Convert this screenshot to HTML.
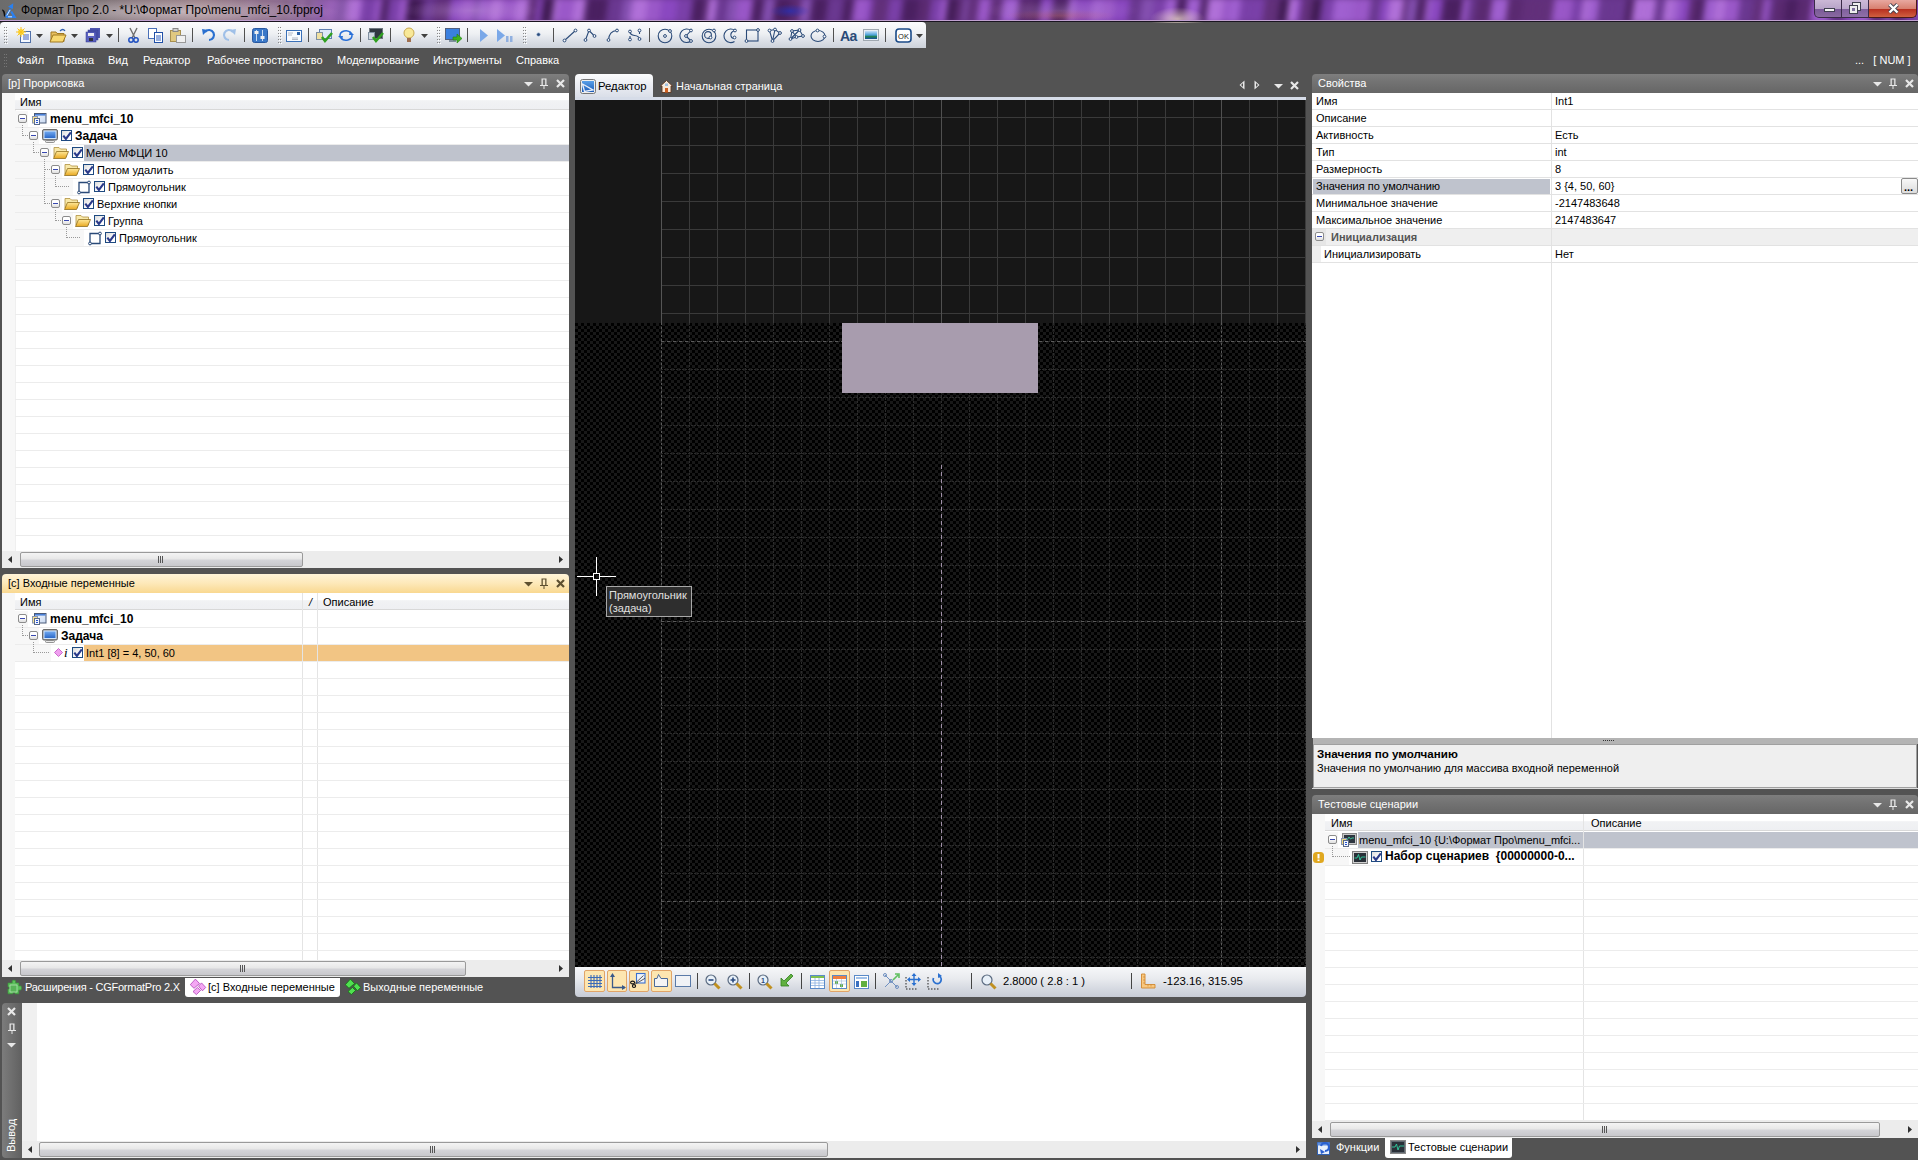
<!DOCTYPE html>
<html><head><meta charset="utf-8"><style>
*{box-sizing:border-box;margin:0;padding:0}
html,body{width:1918px;height:1160px;overflow:hidden;background:#535353;font-family:"Liberation Sans",sans-serif;font-size:11px;color:#000}
.a{position:absolute}
.t{position:absolute;white-space:nowrap;line-height:13px}
svg{position:absolute;overflow:visible}
.b{font-weight:bold}
</style></head><body>
<div class="a" style="left:0px;top:0px;width:1918px;height:21px;background:#5e2e80"></div>
<div class="a" style="left:0;top:0;width:1918px;height:21px;overflow:hidden"><div class="a" style="left:-20px;top:-2px;width:1960px;height:25px;filter:blur(3px)"><div class="a" style="left:0px;top:0;width:9px;height:25px;background:#8450b0;transform:skewX(-8deg)"></div><div class="a" style="left:9px;top:0;width:14px;height:25px;background:#a060d0;transform:skewX(-8deg)"></div><div class="a" style="left:23px;top:0;width:9px;height:25px;background:#5a2a70;transform:skewX(-8deg)"></div><div class="a" style="left:32px;top:0;width:4px;height:25px;background:#8a48c0;transform:skewX(-8deg)"></div><div class="a" style="left:36px;top:0;width:5px;height:25px;background:#8a48c0;transform:skewX(-8deg)"></div><div class="a" style="left:41px;top:0;width:4px;height:25px;background:#7a40a8;transform:skewX(-8deg)"></div><div class="a" style="left:45px;top:0;width:7px;height:25px;background:#4a2060;transform:skewX(-8deg)"></div><div class="a" style="left:52px;top:0;width:13px;height:25px;background:#4a2060;transform:skewX(-8deg)"></div><div class="a" style="left:65px;top:0;width:7px;height:25px;background:#9a58c8;transform:skewX(-8deg)"></div><div class="a" style="left:72px;top:0;width:8px;height:25px;background:#a060d0;transform:skewX(-8deg)"></div><div class="a" style="left:80px;top:0;width:13px;height:25px;background:#9a58c8;transform:skewX(-8deg)"></div><div class="a" style="left:93px;top:0;width:5px;height:25px;background:#5a2a70;transform:skewX(-8deg)"></div><div class="a" style="left:98px;top:0;width:9px;height:25px;background:#a060d0;transform:skewX(-8deg)"></div><div class="a" style="left:107px;top:0;width:13px;height:25px;background:#9a58c8;transform:skewX(-8deg)"></div><div class="a" style="left:120px;top:0;width:11px;height:25px;background:#62307a;transform:skewX(-8deg)"></div><div class="a" style="left:131px;top:0;width:16px;height:25px;background:#8a48c0;transform:skewX(-8deg)"></div><div class="a" style="left:147px;top:0;width:9px;height:25px;background:#9a58c8;transform:skewX(-8deg)"></div><div class="a" style="left:156px;top:0;width:15px;height:25px;background:#4a2060;transform:skewX(-8deg)"></div><div class="a" style="left:171px;top:0;width:13px;height:25px;background:#8a48c0;transform:skewX(-8deg)"></div><div class="a" style="left:184px;top:0;width:9px;height:25px;background:#3e1a50;transform:skewX(-8deg)"></div><div class="a" style="left:193px;top:0;width:13px;height:25px;background:#7a40a8;transform:skewX(-8deg)"></div><div class="a" style="left:206px;top:0;width:12px;height:25px;background:#b070d8;transform:skewX(-8deg)"></div><div class="a" style="left:218px;top:0;width:6px;height:25px;background:#8450b0;transform:skewX(-8deg)"></div><div class="a" style="left:224px;top:0;width:4px;height:25px;background:#7a40a8;transform:skewX(-8deg)"></div><div class="a" style="left:228px;top:0;width:16px;height:25px;background:#3e1a50;transform:skewX(-8deg)"></div><div class="a" style="left:244px;top:0;width:9px;height:25px;background:#62307a;transform:skewX(-8deg)"></div><div class="a" style="left:253px;top:0;width:13px;height:25px;background:#4a2060;transform:skewX(-8deg)"></div><div class="a" style="left:266px;top:0;width:5px;height:25px;background:#8450b0;transform:skewX(-8deg)"></div><div class="a" style="left:271px;top:0;width:15px;height:25px;background:#4a2060;transform:skewX(-8deg)"></div><div class="a" style="left:286px;top:0;width:15px;height:25px;background:#62307a;transform:skewX(-8deg)"></div><div class="a" style="left:301px;top:0;width:8px;height:25px;background:#3e1a50;transform:skewX(-8deg)"></div><div class="a" style="left:309px;top:0;width:4px;height:25px;background:#8450b0;transform:skewX(-8deg)"></div><div class="a" style="left:313px;top:0;width:6px;height:25px;background:#62307a;transform:skewX(-8deg)"></div><div class="a" style="left:319px;top:0;width:4px;height:25px;background:#b070d8;transform:skewX(-8deg)"></div><div class="a" style="left:323px;top:0;width:6px;height:25px;background:#62307a;transform:skewX(-8deg)"></div><div class="a" style="left:329px;top:0;width:10px;height:25px;background:#8450b0;transform:skewX(-8deg)"></div><div class="a" style="left:339px;top:0;width:5px;height:25px;background:#8a48c0;transform:skewX(-8deg)"></div><div class="a" style="left:344px;top:0;width:12px;height:25px;background:#9a58c8;transform:skewX(-8deg)"></div><div class="a" style="left:356px;top:0;width:10px;height:25px;background:#8450b0;transform:skewX(-8deg)"></div><div class="a" style="left:366px;top:0;width:15px;height:25px;background:#b070d8;transform:skewX(-8deg)"></div><div class="a" style="left:381px;top:0;width:14px;height:25px;background:#7a40a8;transform:skewX(-8deg)"></div><div class="a" style="left:395px;top:0;width:6px;height:25px;background:#9a58c8;transform:skewX(-8deg)"></div><div class="a" style="left:401px;top:0;width:7px;height:25px;background:#4a2060;transform:skewX(-8deg)"></div><div class="a" style="left:408px;top:0;width:11px;height:25px;background:#7a40a8;transform:skewX(-8deg)"></div><div class="a" style="left:419px;top:0;width:8px;height:25px;background:#9a58c8;transform:skewX(-8deg)"></div><div class="a" style="left:427px;top:0;width:10px;height:25px;background:#3e1a50;transform:skewX(-8deg)"></div><div class="a" style="left:437px;top:0;width:6px;height:25px;background:#4a2060;transform:skewX(-8deg)"></div><div class="a" style="left:443px;top:0;width:11px;height:25px;background:#6a3890;transform:skewX(-8deg)"></div><div class="a" style="left:454px;top:0;width:16px;height:25px;background:#62307a;transform:skewX(-8deg)"></div><div class="a" style="left:470px;top:0;width:10px;height:25px;background:#8a48c0;transform:skewX(-8deg)"></div><div class="a" style="left:480px;top:0;width:14px;height:25px;background:#9a58c8;transform:skewX(-8deg)"></div><div class="a" style="left:494px;top:0;width:5px;height:25px;background:#8450b0;transform:skewX(-8deg)"></div><div class="a" style="left:499px;top:0;width:6px;height:25px;background:#a060d0;transform:skewX(-8deg)"></div><div class="a" style="left:505px;top:0;width:5px;height:25px;background:#9a58c8;transform:skewX(-8deg)"></div><div class="a" style="left:510px;top:0;width:12px;height:25px;background:#b070d8;transform:skewX(-8deg)"></div><div class="a" style="left:522px;top:0;width:13px;height:25px;background:#9a58c8;transform:skewX(-8deg)"></div><div class="a" style="left:535px;top:0;width:13px;height:25px;background:#b070d8;transform:skewX(-8deg)"></div><div class="a" style="left:548px;top:0;width:9px;height:25px;background:#62307a;transform:skewX(-8deg)"></div><div class="a" style="left:557px;top:0;width:5px;height:25px;background:#8a48c0;transform:skewX(-8deg)"></div><div class="a" style="left:562px;top:0;width:11px;height:25px;background:#3e1a50;transform:skewX(-8deg)"></div><div class="a" style="left:573px;top:0;width:5px;height:25px;background:#b070d8;transform:skewX(-8deg)"></div><div class="a" style="left:578px;top:0;width:15px;height:25px;background:#9a58c8;transform:skewX(-8deg)"></div><div class="a" style="left:593px;top:0;width:12px;height:25px;background:#b070d8;transform:skewX(-8deg)"></div><div class="a" style="left:605px;top:0;width:6px;height:25px;background:#4a2060;transform:skewX(-8deg)"></div><div class="a" style="left:611px;top:0;width:16px;height:25px;background:#4a2060;transform:skewX(-8deg)"></div><div class="a" style="left:627px;top:0;width:15px;height:25px;background:#6a3890;transform:skewX(-8deg)"></div><div class="a" style="left:642px;top:0;width:9px;height:25px;background:#8450b0;transform:skewX(-8deg)"></div><div class="a" style="left:651px;top:0;width:16px;height:25px;background:#b070d8;transform:skewX(-8deg)"></div><div class="a" style="left:667px;top:0;width:14px;height:25px;background:#9a58c8;transform:skewX(-8deg)"></div><div class="a" style="left:681px;top:0;width:16px;height:25px;background:#8a48c0;transform:skewX(-8deg)"></div><div class="a" style="left:697px;top:0;width:15px;height:25px;background:#7a40a8;transform:skewX(-8deg)"></div><div class="a" style="left:712px;top:0;width:12px;height:25px;background:#4a2060;transform:skewX(-8deg)"></div><div class="a" style="left:724px;top:0;width:4px;height:25px;background:#62307a;transform:skewX(-8deg)"></div><div class="a" style="left:728px;top:0;width:8px;height:25px;background:#b070d8;transform:skewX(-8deg)"></div><div class="a" style="left:736px;top:0;width:11px;height:25px;background:#6a3890;transform:skewX(-8deg)"></div><div class="a" style="left:747px;top:0;width:9px;height:25px;background:#8450b0;transform:skewX(-8deg)"></div><div class="a" style="left:756px;top:0;width:5px;height:25px;background:#9a58c8;transform:skewX(-8deg)"></div><div class="a" style="left:761px;top:0;width:11px;height:25px;background:#9a58c8;transform:skewX(-8deg)"></div><div class="a" style="left:772px;top:0;width:11px;height:25px;background:#4a2060;transform:skewX(-8deg)"></div><div class="a" style="left:783px;top:0;width:11px;height:25px;background:#8450b0;transform:skewX(-8deg)"></div><div class="a" style="left:794px;top:0;width:16px;height:25px;background:#4a2060;transform:skewX(-8deg)"></div><div class="a" style="left:810px;top:0;width:10px;height:25px;background:#5a2a70;transform:skewX(-8deg)"></div><div class="a" style="left:820px;top:0;width:11px;height:25px;background:#8450b0;transform:skewX(-8deg)"></div><div class="a" style="left:831px;top:0;width:16px;height:25px;background:#4a2060;transform:skewX(-8deg)"></div><div class="a" style="left:847px;top:0;width:16px;height:25px;background:#6a3890;transform:skewX(-8deg)"></div><div class="a" style="left:863px;top:0;width:10px;height:25px;background:#4a2060;transform:skewX(-8deg)"></div><div class="a" style="left:873px;top:0;width:15px;height:25px;background:#9a58c8;transform:skewX(-8deg)"></div><div class="a" style="left:888px;top:0;width:4px;height:25px;background:#8a48c0;transform:skewX(-8deg)"></div><div class="a" style="left:892px;top:0;width:16px;height:25px;background:#62307a;transform:skewX(-8deg)"></div><div class="a" style="left:908px;top:0;width:14px;height:25px;background:#7a40a8;transform:skewX(-8deg)"></div><div class="a" style="left:922px;top:0;width:12px;height:25px;background:#4a2060;transform:skewX(-8deg)"></div><div class="a" style="left:934px;top:0;width:4px;height:25px;background:#4a2060;transform:skewX(-8deg)"></div><div class="a" style="left:938px;top:0;width:12px;height:25px;background:#5a2a70;transform:skewX(-8deg)"></div><div class="a" style="left:950px;top:0;width:10px;height:25px;background:#7a40a8;transform:skewX(-8deg)"></div><div class="a" style="left:960px;top:0;width:7px;height:25px;background:#9a58c8;transform:skewX(-8deg)"></div><div class="a" style="left:967px;top:0;width:8px;height:25px;background:#3e1a50;transform:skewX(-8deg)"></div><div class="a" style="left:975px;top:0;width:8px;height:25px;background:#5a2a70;transform:skewX(-8deg)"></div><div class="a" style="left:983px;top:0;width:4px;height:25px;background:#8450b0;transform:skewX(-8deg)"></div><div class="a" style="left:987px;top:0;width:11px;height:25px;background:#62307a;transform:skewX(-8deg)"></div><div class="a" style="left:998px;top:0;width:12px;height:25px;background:#9a58c8;transform:skewX(-8deg)"></div><div class="a" style="left:1010px;top:0;width:12px;height:25px;background:#62307a;transform:skewX(-8deg)"></div><div class="a" style="left:1022px;top:0;width:16px;height:25px;background:#a060d0;transform:skewX(-8deg)"></div><div class="a" style="left:1038px;top:0;width:16px;height:25px;background:#5a2a70;transform:skewX(-8deg)"></div><div class="a" style="left:1054px;top:0;width:6px;height:25px;background:#4a2060;transform:skewX(-8deg)"></div><div class="a" style="left:1060px;top:0;width:12px;height:25px;background:#8a48c0;transform:skewX(-8deg)"></div><div class="a" style="left:1072px;top:0;width:16px;height:25px;background:#4a2060;transform:skewX(-8deg)"></div><div class="a" style="left:1088px;top:0;width:7px;height:25px;background:#a060d0;transform:skewX(-8deg)"></div><div class="a" style="left:1095px;top:0;width:16px;height:25px;background:#8a48c0;transform:skewX(-8deg)"></div><div class="a" style="left:1111px;top:0;width:12px;height:25px;background:#a060d0;transform:skewX(-8deg)"></div><div class="a" style="left:1123px;top:0;width:11px;height:25px;background:#9a58c8;transform:skewX(-8deg)"></div><div class="a" style="left:1134px;top:0;width:15px;height:25px;background:#8a48c0;transform:skewX(-8deg)"></div><div class="a" style="left:1149px;top:0;width:12px;height:25px;background:#6a3890;transform:skewX(-8deg)"></div><div class="a" style="left:1161px;top:0;width:12px;height:25px;background:#8450b0;transform:skewX(-8deg)"></div><div class="a" style="left:1173px;top:0;width:12px;height:25px;background:#7a40a8;transform:skewX(-8deg)"></div><div class="a" style="left:1185px;top:0;width:11px;height:25px;background:#a060d0;transform:skewX(-8deg)"></div><div class="a" style="left:1196px;top:0;width:10px;height:25px;background:#4a2060;transform:skewX(-8deg)"></div><div class="a" style="left:1206px;top:0;width:14px;height:25px;background:#a060d0;transform:skewX(-8deg)"></div><div class="a" style="left:1220px;top:0;width:7px;height:25px;background:#4a2060;transform:skewX(-8deg)"></div><div class="a" style="left:1227px;top:0;width:16px;height:25px;background:#b070d8;transform:skewX(-8deg)"></div><div class="a" style="left:1243px;top:0;width:6px;height:25px;background:#9a58c8;transform:skewX(-8deg)"></div><div class="a" style="left:1249px;top:0;width:11px;height:25px;background:#a060d0;transform:skewX(-8deg)"></div><div class="a" style="left:1260px;top:0;width:10px;height:25px;background:#7a40a8;transform:skewX(-8deg)"></div><div class="a" style="left:1270px;top:0;width:14px;height:25px;background:#7a40a8;transform:skewX(-8deg)"></div><div class="a" style="left:1284px;top:0;width:15px;height:25px;background:#62307a;transform:skewX(-8deg)"></div><div class="a" style="left:1299px;top:0;width:9px;height:25px;background:#3e1a50;transform:skewX(-8deg)"></div><div class="a" style="left:1308px;top:0;width:9px;height:25px;background:#b070d8;transform:skewX(-8deg)"></div><div class="a" style="left:1317px;top:0;width:4px;height:25px;background:#8a48c0;transform:skewX(-8deg)"></div><div class="a" style="left:1321px;top:0;width:11px;height:25px;background:#62307a;transform:skewX(-8deg)"></div><div class="a" style="left:1332px;top:0;width:9px;height:25px;background:#3e1a50;transform:skewX(-8deg)"></div><div class="a" style="left:1341px;top:0;width:12px;height:25px;background:#7a40a8;transform:skewX(-8deg)"></div><div class="a" style="left:1353px;top:0;width:16px;height:25px;background:#a060d0;transform:skewX(-8deg)"></div><div class="a" style="left:1369px;top:0;width:5px;height:25px;background:#a060d0;transform:skewX(-8deg)"></div><div class="a" style="left:1374px;top:0;width:16px;height:25px;background:#9a58c8;transform:skewX(-8deg)"></div><div class="a" style="left:1390px;top:0;width:10px;height:25px;background:#6a3890;transform:skewX(-8deg)"></div><div class="a" style="left:1400px;top:0;width:8px;height:25px;background:#8a48c0;transform:skewX(-8deg)"></div><div class="a" style="left:1408px;top:0;width:15px;height:25px;background:#b070d8;transform:skewX(-8deg)"></div><div class="a" style="left:1423px;top:0;width:4px;height:25px;background:#5a2a70;transform:skewX(-8deg)"></div><div class="a" style="left:1427px;top:0;width:10px;height:25px;background:#8450b0;transform:skewX(-8deg)"></div><div class="a" style="left:1437px;top:0;width:4px;height:25px;background:#3e1a50;transform:skewX(-8deg)"></div><div class="a" style="left:1441px;top:0;width:5px;height:25px;background:#5a2a70;transform:skewX(-8deg)"></div><div class="a" style="left:1446px;top:0;width:5px;height:25px;background:#a060d0;transform:skewX(-8deg)"></div><div class="a" style="left:1451px;top:0;width:11px;height:25px;background:#8a48c0;transform:skewX(-8deg)"></div><div class="a" style="left:1462px;top:0;width:8px;height:25px;background:#4a2060;transform:skewX(-8deg)"></div><div class="a" style="left:1470px;top:0;width:12px;height:25px;background:#4a2060;transform:skewX(-8deg)"></div><div class="a" style="left:1482px;top:0;width:6px;height:25px;background:#9a58c8;transform:skewX(-8deg)"></div><div class="a" style="left:1488px;top:0;width:7px;height:25px;background:#6a3890;transform:skewX(-8deg)"></div><div class="a" style="left:1495px;top:0;width:8px;height:25px;background:#5a2a70;transform:skewX(-8deg)"></div><div class="a" style="left:1503px;top:0;width:8px;height:25px;background:#5a2a70;transform:skewX(-8deg)"></div><div class="a" style="left:1511px;top:0;width:8px;height:25px;background:#a060d0;transform:skewX(-8deg)"></div><div class="a" style="left:1519px;top:0;width:8px;height:25px;background:#a060d0;transform:skewX(-8deg)"></div><div class="a" style="left:1527px;top:0;width:15px;height:25px;background:#5a2a70;transform:skewX(-8deg)"></div><div class="a" style="left:1542px;top:0;width:12px;height:25px;background:#62307a;transform:skewX(-8deg)"></div><div class="a" style="left:1554px;top:0;width:5px;height:25px;background:#62307a;transform:skewX(-8deg)"></div><div class="a" style="left:1559px;top:0;width:14px;height:25px;background:#62307a;transform:skewX(-8deg)"></div><div class="a" style="left:1573px;top:0;width:12px;height:25px;background:#9a58c8;transform:skewX(-8deg)"></div><div class="a" style="left:1585px;top:0;width:7px;height:25px;background:#9a58c8;transform:skewX(-8deg)"></div><div class="a" style="left:1592px;top:0;width:10px;height:25px;background:#7a40a8;transform:skewX(-8deg)"></div><div class="a" style="left:1602px;top:0;width:6px;height:25px;background:#b070d8;transform:skewX(-8deg)"></div><div class="a" style="left:1608px;top:0;width:10px;height:25px;background:#a060d0;transform:skewX(-8deg)"></div><div class="a" style="left:1618px;top:0;width:14px;height:25px;background:#6a3890;transform:skewX(-8deg)"></div><div class="a" style="left:1632px;top:0;width:14px;height:25px;background:#6a3890;transform:skewX(-8deg)"></div><div class="a" style="left:1646px;top:0;width:7px;height:25px;background:#4a2060;transform:skewX(-8deg)"></div><div class="a" style="left:1653px;top:0;width:11px;height:25px;background:#b070d8;transform:skewX(-8deg)"></div><div class="a" style="left:1664px;top:0;width:11px;height:25px;background:#b070d8;transform:skewX(-8deg)"></div><div class="a" style="left:1675px;top:0;width:9px;height:25px;background:#6a3890;transform:skewX(-8deg)"></div><div class="a" style="left:1684px;top:0;width:9px;height:25px;background:#b070d8;transform:skewX(-8deg)"></div><div class="a" style="left:1693px;top:0;width:7px;height:25px;background:#a060d0;transform:skewX(-8deg)"></div><div class="a" style="left:1700px;top:0;width:9px;height:25px;background:#8a48c0;transform:skewX(-8deg)"></div><div class="a" style="left:1709px;top:0;width:8px;height:25px;background:#5a2a70;transform:skewX(-8deg)"></div><div class="a" style="left:1717px;top:0;width:7px;height:25px;background:#4a2060;transform:skewX(-8deg)"></div><div class="a" style="left:1724px;top:0;width:5px;height:25px;background:#a060d0;transform:skewX(-8deg)"></div><div class="a" style="left:1729px;top:0;width:6px;height:25px;background:#a060d0;transform:skewX(-8deg)"></div><div class="a" style="left:1735px;top:0;width:10px;height:25px;background:#b070d8;transform:skewX(-8deg)"></div><div class="a" style="left:1745px;top:0;width:14px;height:25px;background:#9a58c8;transform:skewX(-8deg)"></div><div class="a" style="left:1759px;top:0;width:14px;height:25px;background:#6a3890;transform:skewX(-8deg)"></div><div class="a" style="left:1773px;top:0;width:10px;height:25px;background:#62307a;transform:skewX(-8deg)"></div><div class="a" style="left:1783px;top:0;width:6px;height:25px;background:#9a58c8;transform:skewX(-8deg)"></div><div class="a" style="left:1789px;top:0;width:4px;height:25px;background:#6a3890;transform:skewX(-8deg)"></div><div class="a" style="left:1793px;top:0;width:12px;height:25px;background:#5a2a70;transform:skewX(-8deg)"></div><div class="a" style="left:1805px;top:0;width:12px;height:25px;background:#4a2060;transform:skewX(-8deg)"></div><div class="a" style="left:1817px;top:0;width:14px;height:25px;background:#5a2a70;transform:skewX(-8deg)"></div><div class="a" style="left:1831px;top:0;width:5px;height:25px;background:#9a58c8;transform:skewX(-8deg)"></div><div class="a" style="left:1836px;top:0;width:14px;height:25px;background:#a060d0;transform:skewX(-8deg)"></div><div class="a" style="left:1850px;top:0;width:10px;height:25px;background:#6a3890;transform:skewX(-8deg)"></div><div class="a" style="left:1860px;top:0;width:4px;height:25px;background:#5a2a70;transform:skewX(-8deg)"></div><div class="a" style="left:1864px;top:0;width:11px;height:25px;background:#8a48c0;transform:skewX(-8deg)"></div><div class="a" style="left:1875px;top:0;width:16px;height:25px;background:#a060d0;transform:skewX(-8deg)"></div><div class="a" style="left:1891px;top:0;width:14px;height:25px;background:#62307a;transform:skewX(-8deg)"></div><div class="a" style="left:1905px;top:0;width:8px;height:25px;background:#8450b0;transform:skewX(-8deg)"></div><div class="a" style="left:1913px;top:0;width:7px;height:25px;background:#5a2a70;transform:skewX(-8deg)"></div><div class="a" style="left:1920px;top:0;width:7px;height:25px;background:#62307a;transform:skewX(-8deg)"></div><div class="a" style="left:1927px;top:0;width:11px;height:25px;background:#7a40a8;transform:skewX(-8deg)"></div><div class="a" style="left:1938px;top:0;width:11px;height:25px;background:#8450b0;transform:skewX(-8deg)"></div><div class="a" style="left:1949px;top:0;width:16px;height:25px;background:#9a58c8;transform:skewX(-8deg)"></div></div></div>
<div class="a" style="left:1150px;top:3px;width:55px;height:20px;background:radial-gradient(ellipse 50% 60% at 50% 80%,rgba(235,215,200,.75),rgba(235,215,200,0) 100%)"></div>
<div class="a" style="left:1005px;top:6px;width:110px;height:16px;background:radial-gradient(ellipse 50% 40% at 50% 60%,rgba(220,110,70,.3),rgba(220,110,70,0) 100%)"></div>
<div class="a" style="left:770px;top:4px;width:40px;height:14px;background:radial-gradient(ellipse at center,rgba(30,50,200,.6),rgba(30,50,200,0) 70%)"></div>
<div class="a" style="left:400px;top:0px;width:140px;height:21px;background:radial-gradient(ellipse 50% 50% at 50% 50%,rgba(200,160,220,.35),rgba(200,160,220,0) 100%)"></div>
<div class="a" style="left:980px;top:0px;width:160px;height:21px;background:radial-gradient(ellipse 50% 50% at 50% 50%,rgba(190,150,210,.3),rgba(190,150,210,0) 100%)"></div>
<div class="a" style="left:0px;top:0px;width:360px;height:21px;background:linear-gradient(90deg,#6c6c6c 0,#747070 60px,#8a7a80 130px,#9a8088 200px,rgba(150,120,150,.8) 290px,rgba(140,90,160,0) 360px)"></div>
<div class="a" style="left:10px;top:0px;width:330px;height:21px;background:radial-gradient(ellipse 50% 60% at 50% 55%,rgba(235,225,230,.55),rgba(235,225,230,0) 100%)"></div>
<div class="a" style="left:0px;top:20px;width:1918px;height:1px;background:#c0a0d0"></div>
<div class="a" style="left:0px;top:21px;width:1918px;height:1px;background:#1a1420"></div>
<div class="t" style="left:21px;top:4px;font-size:12px;color:#000">Формат Про 2.0 - *U:\Формат Про\menu_mfci_10.fpproj</div>
<svg style="left:0px;top:0px" width="20" height="20" viewBox="0 0 20 20"><path d="M2.2 10.2 Q4.2 10 4.8 16.5" stroke="#111" stroke-width="1.6" fill="none"/><path d="M5.8 16.8 L10.5 9 M5.8 16.8 H14.5 L11.2 11.5" stroke="#2a80f0" stroke-width="2.2" fill="none"/><path d="M6.8 15.5 L10 10 M8 16.8 H12" stroke="#e8f4ff" stroke-width=".9" fill="none"/><path d="M13.3 3.3 L8 6.8 L12.8 9.2Z" fill="#2a80f0"/></svg>
<div class="a" style="left:1814px;top:0px;width:28px;height:18px;background:linear-gradient(#cbb8d6 0,#b8a4c8 50%,#7a5a98 55%,#8a6aa0 100%);border:1px solid #3a2a48;border-top:none;border-radius:0 0 0 5px"></div>
<div class="a" style="left:1842px;top:0px;width:27px;height:18px;background:linear-gradient(#cdbad8 0,#bca8cc 50%,#80609e 55%,#9070a8 100%);border:1px solid #3a2a48;border-top:none;border-left:none"></div>
<div class="a" style="left:1869px;top:0px;width:48px;height:18px;background:linear-gradient(#e8a8a0 0,#d88070 50%,#b83020 55%,#d06040 100%);border:1px solid #4a1a18;border-top:none;border-left:none;border-radius:0 0 5px 0"></div>
<div class="a" style="left:1824px;top:8px;width:11px;height:4px;background:#f4f4f4;border:1px solid #404050"></div>
<svg style="left:1849px;top:2px" width="12" height="12"><rect x="3.5" y="0.5" width="8" height="8" fill="#eee" stroke="#404050"/><rect x="0.5" y="3.5" width="8" height="8" fill="#eee" stroke="#404050"/><rect x="3" y="6" width="3" height="3" fill="#8070a0"/></svg>
<svg style="left:1888px;top:3px" width="11" height="11"><path d="M1.5 1.5 L9.5 9.5 M9.5 1.5 L1.5 9.5" stroke="#404050" stroke-width="4"/><path d="M1.5 1.5 L9.5 9.5 M9.5 1.5 L1.5 9.5" stroke="#fff" stroke-width="2.4"/></svg>
<div class="a" style="left:0px;top:22px;width:926px;height:26px;background:linear-gradient(#fbfcfd 0,#eef0f3 45%,#dde1e8 70%,#cdd2da 100%);border-radius:4px 4px 0 0"></div>
<div class="a" style="left:4px;top:27px;width:1px;height:1px;background:#888;box-shadow:2px 0 0 #888,1px 1px 0 #fff,3px 1px 0 #fff"></div>
<div class="a" style="left:4px;top:30px;width:1px;height:1px;background:#888;box-shadow:2px 0 0 #888,1px 1px 0 #fff,3px 1px 0 #fff"></div>
<div class="a" style="left:4px;top:33px;width:1px;height:1px;background:#888;box-shadow:2px 0 0 #888,1px 1px 0 #fff,3px 1px 0 #fff"></div>
<div class="a" style="left:4px;top:36px;width:1px;height:1px;background:#888;box-shadow:2px 0 0 #888,1px 1px 0 #fff,3px 1px 0 #fff"></div>
<div class="a" style="left:4px;top:39px;width:1px;height:1px;background:#888;box-shadow:2px 0 0 #888,1px 1px 0 #fff,3px 1px 0 #fff"></div>
<div class="a" style="left:4px;top:42px;width:1px;height:1px;background:#888;box-shadow:2px 0 0 #888,1px 1px 0 #fff,3px 1px 0 #fff"></div>
<svg style="left:16px;top:27px" width="16" height="16" viewBox="0 0 16 16"><rect x="4.5" y="4.5" width="10" height="11" fill="#f4f8ff" stroke="#5070a8"/><path d="M7 8h6M7 10h6M7 12h6" stroke="#4060c0"/><circle cx="5" cy="5" r="3" fill="#ffe040"/><path d="M5 0v10M0 5h10M1.5 1.5l7 7M8.5 1.5l-7 7" stroke="#f8c020" stroke-width="1"/></svg>
<svg style="left:36px;top:34px" width="7" height="4" viewBox="0 0 7 4"><path d="M0 0 H7 L3.5 4Z" fill="#404040"/></svg>
<svg style="left:50px;top:28px" width="17" height="15" viewBox="0 0 17 15"><path d="M1 4h5l1 1.5h7v8H1z" fill="#e8c060" stroke="#a07820"/><path d="M3 7h13l-3 7H0z" fill="#f8d870" stroke="#a07820"/><path d="M10 3q3-3 5 0" stroke="#3060b0" fill="none" stroke-width="1.3"/></svg>
<svg style="left:71px;top:34px" width="7" height="4" viewBox="0 0 7 4"><path d="M0 0 H7 L3.5 4Z" fill="#404040"/></svg>
<svg style="left:86px;top:28px" width="14" height="15" viewBox="0 0 14 15"><rect x="4" y="0" width="10" height="10" fill="#5058b0"/><rect x="2" y="2" width="10" height="10" fill="#4850a8" stroke="#30389a" stroke-width=".5"/><rect x="0" y="4" width="10" height="10" fill="#5a60c0" stroke="#303890" stroke-width=".5"/><rect x="2" y="5" width="6" height="3" fill="#e8e8f0"/><rect x="3" y="10" width="4" height="3" fill="#303040"/></svg>
<svg style="left:106px;top:34px" width="7" height="4" viewBox="0 0 7 4"><path d="M0 0 H7 L3.5 4Z" fill="#404040"/></svg>
<div class="a" style="left:118px;top:28px;width:1px;height:14px;background:#505050"></div>
<svg style="left:128px;top:28px" width="11" height="15" viewBox="0 0 11 15"><path d="M2 0 L7 10 M9 0 L4 10" stroke="#707070" stroke-width="1.4"/><circle cx="3" cy="12" r="2.2" fill="none" stroke="#2050c0" stroke-width="1.5"/><circle cx="8" cy="12" r="2.2" fill="none" stroke="#2050c0" stroke-width="1.5"/></svg>
<svg style="left:148px;top:28px" width="16" height="15" viewBox="0 0 16 15"><rect x="0.5" y="0.5" width="8" height="10" fill="#fff" stroke="#4a70b8"/><rect x="6.5" y="4.5" width="8" height="10" fill="#fff" stroke="#2050a8"/><path d="M8 8h5M8 10h5M8 12h5" stroke="#3060c0"/></svg>
<svg style="left:170px;top:28px" width="16" height="15" viewBox="0 0 16 15"><rect x="0.5" y="2.5" width="10" height="11" fill="#e0c880" stroke="#a89050"/><rect x="3" y="0.5" width="5" height="3" fill="#d0d0d0" stroke="#888"/><rect x="6.5" y="7.5" width="9" height="7" fill="#f0f0f0" stroke="#999"/></svg>
<div class="a" style="left:192px;top:28px;width:1px;height:14px;background:#505050"></div>
<svg style="left:202px;top:29px" width="13" height="12" viewBox="0 0 13 12"><path d="M3 3 A5 5 0 1 1 7 11" fill="none" stroke="#2a70d0" stroke-width="2.2"/><path d="M0 0 L6 1 L1 6Z" fill="#2a70d0"/></svg>
<svg style="left:222px;top:29px" width="14" height="12" viewBox="0 0 14 12"><path d="M11 3 A5 5 0 1 0 7 11" fill="none" stroke="#a0c0e8" stroke-width="2.2"/><path d="M14 0 L8 1 L13 6Z" fill="#a0c0e8"/></svg>
<div class="a" style="left:244px;top:28px;width:1px;height:14px;background:#505050"></div>
<svg style="left:252px;top:28px" width="16" height="15" viewBox="0 0 16 15"><rect x="0.5" y="0.5" width="15" height="14" rx="2" fill="#3a78c8" stroke="#2858a0"/><path d="M4.5 2v11M10.5 2v11" stroke="#c8dcf4"/><rect x="2.5" y="3" width="4" height="3" fill="#f0f0f0"/><rect x="8.5" y="8" width="4" height="3" fill="#f0f0f0"/></svg>
<div class="a" style="left:278px;top:27px;width:1px;height:1px;background:#888;box-shadow:2px 0 0 #888,1px 1px 0 #fff,3px 1px 0 #fff"></div>
<div class="a" style="left:278px;top:30px;width:1px;height:1px;background:#888;box-shadow:2px 0 0 #888,1px 1px 0 #fff,3px 1px 0 #fff"></div>
<div class="a" style="left:278px;top:33px;width:1px;height:1px;background:#888;box-shadow:2px 0 0 #888,1px 1px 0 #fff,3px 1px 0 #fff"></div>
<div class="a" style="left:278px;top:36px;width:1px;height:1px;background:#888;box-shadow:2px 0 0 #888,1px 1px 0 #fff,3px 1px 0 #fff"></div>
<div class="a" style="left:278px;top:39px;width:1px;height:1px;background:#888;box-shadow:2px 0 0 #888,1px 1px 0 #fff,3px 1px 0 #fff"></div>
<div class="a" style="left:278px;top:42px;width:1px;height:1px;background:#888;box-shadow:2px 0 0 #888,1px 1px 0 #fff,3px 1px 0 #fff"></div>
<svg style="left:286px;top:30px" width="16" height="12" viewBox="0 0 16 12"><rect x="0.5" y="0.5" width="15" height="11" fill="#f8fbff" stroke="#3a70b8"/><rect x="11" y="2" width="3" height="3" fill="#2a60a8"/><path d="M2 3h5M2 5h4M6 8h6M6 9.5h6" stroke="#a0a8b8" stroke-width=".8"/></svg>
<div class="a" style="left:308px;top:28px;width:1px;height:14px;background:#505050"></div>
<svg style="left:316px;top:28px" width="17" height="15" viewBox="0 0 17 15"><rect x="3.5" y="1.5" width="12" height="9" fill="#dde8f8" stroke="#6080b0"/><rect x="0.5" y="4.5" width="6" height="7" fill="#f0e0a0" stroke="#8090a0"/><path d="M6 9 L9 13 L16 5" fill="none" stroke="#30a020" stroke-width="2.6"/></svg>
<svg style="left:338px;top:29px" width="16" height="13" viewBox="0 0 16 13"><path d="M2 7 A6 5 0 0 1 13 4" fill="none" stroke="#2a70d8" stroke-width="1.5"/><path d="M14 6 A6 5 0 0 1 3 9" fill="none" stroke="#2a70d8" stroke-width="1.5"/><path d="M12 2 L16 6 L11 6Z M4 11 L0 7 L5 7Z" fill="#2a70d8"/></svg>
<div class="a" style="left:360px;top:28px;width:1px;height:14px;background:#505050"></div>
<svg style="left:368px;top:28px" width="16" height="15" viewBox="0 0 16 15"><rect x="1.5" y="0.5" width="13" height="10" fill="#303840" stroke="#707880"/><rect x="0.5" y="4.5" width="6" height="7" fill="#d0d8e0" stroke="#8090a0"/><path d="M5 9 L8 13 L15 5" fill="none" stroke="#30a020" stroke-width="2.6"/></svg>
<div class="a" style="left:390px;top:28px;width:1px;height:14px;background:#505050"></div>
<svg style="left:403px;top:27px" width="12" height="16" viewBox="0 0 12 16"><circle cx="6" cy="6" r="5" fill="#f8e898" stroke="#c8a850"/><rect x="4" y="11" width="4" height="4" fill="#a07050"/></svg>
<svg style="left:421px;top:34px" width="7" height="4" viewBox="0 0 7 4"><path d="M0 0 H7 L3.5 4Z" fill="#404040"/></svg>
<div class="a" style="left:437px;top:27px;width:1px;height:1px;background:#888;box-shadow:2px 0 0 #888,1px 1px 0 #fff,3px 1px 0 #fff"></div>
<div class="a" style="left:437px;top:30px;width:1px;height:1px;background:#888;box-shadow:2px 0 0 #888,1px 1px 0 #fff,3px 1px 0 #fff"></div>
<div class="a" style="left:437px;top:33px;width:1px;height:1px;background:#888;box-shadow:2px 0 0 #888,1px 1px 0 #fff,3px 1px 0 #fff"></div>
<div class="a" style="left:437px;top:36px;width:1px;height:1px;background:#888;box-shadow:2px 0 0 #888,1px 1px 0 #fff,3px 1px 0 #fff"></div>
<div class="a" style="left:437px;top:39px;width:1px;height:1px;background:#888;box-shadow:2px 0 0 #888,1px 1px 0 #fff,3px 1px 0 #fff"></div>
<div class="a" style="left:437px;top:42px;width:1px;height:1px;background:#888;box-shadow:2px 0 0 #888,1px 1px 0 #fff,3px 1px 0 #fff"></div>
<svg style="left:445px;top:28px" width="17" height="15" viewBox="0 0 17 15"><rect x="0.5" y="0.5" width="14" height="11" fill="#3a80e0" stroke="#506080"/><rect x="4" y="12" width="7" height="2" fill="#8090a0"/><path d="M8 9h4v-3l5 4.5-5 4.5v-3h-4z" fill="#40b020" stroke="#208010" stroke-width=".6"/></svg>
<div class="a" style="left:467px;top:28px;width:1px;height:14px;background:#505050"></div>
<svg style="left:480px;top:29px" width="8" height="13" viewBox="0 0 8 13"><path d="M0 0 L8 6.5 L0 13Z" fill="#7aa8e8"/></svg>
<svg style="left:497px;top:29px" width="17" height="13" viewBox="0 0 17 13"><path d="M0 0 L8 6.5 L0 13Z" fill="#7aa8e8"/><rect x="9" y="7" width="2.5" height="6" fill="#90b0e0"/><rect x="13" y="7" width="2.5" height="6" fill="#90b0e0"/></svg>
<div class="a" style="left:523px;top:27px;width:1px;height:1px;background:#888;box-shadow:2px 0 0 #888,1px 1px 0 #fff,3px 1px 0 #fff"></div>
<div class="a" style="left:523px;top:30px;width:1px;height:1px;background:#888;box-shadow:2px 0 0 #888,1px 1px 0 #fff,3px 1px 0 #fff"></div>
<div class="a" style="left:523px;top:33px;width:1px;height:1px;background:#888;box-shadow:2px 0 0 #888,1px 1px 0 #fff,3px 1px 0 #fff"></div>
<div class="a" style="left:523px;top:36px;width:1px;height:1px;background:#888;box-shadow:2px 0 0 #888,1px 1px 0 #fff,3px 1px 0 #fff"></div>
<div class="a" style="left:523px;top:39px;width:1px;height:1px;background:#888;box-shadow:2px 0 0 #888,1px 1px 0 #fff,3px 1px 0 #fff"></div>
<div class="a" style="left:523px;top:42px;width:1px;height:1px;background:#888;box-shadow:2px 0 0 #888,1px 1px 0 #fff,3px 1px 0 #fff"></div>
<svg style="left:536px;top:32px" width="5" height="5" viewBox="0 0 5 5"><circle cx="2.5" cy="2.5" r="1.6" fill="#2a4a78" stroke="#6a8ab8" stroke-width=".6"/></svg>
<div class="a" style="left:553px;top:28px;width:1px;height:14px;background:#505050"></div>
<svg style="left:563px;top:29px" width="15" height="13" viewBox="0 0 15 13"><path d="M1.5 11.5 L12.5 1.5" stroke="#2a4a78" fill="none" stroke-width="1.1"/><circle cx="1.5" cy="11.5" r="1.4" fill="#fff" stroke="#2a4a78" stroke-width="1"/><circle cx="12.5" cy="1.5" r="1.4" fill="#fff" stroke="#2a4a78" stroke-width="1"/></svg>
<svg style="left:584px;top:29px" width="15" height="13" viewBox="0 0 15 13"><path d="M1.5 11 L5 1.5 L10.5 7" stroke="#2a4a78" fill="none" stroke-width="1.1"/><circle cx="1.5" cy="11" r="1.4" fill="#fff" stroke="#2a4a78" stroke-width="1"/><circle cx="5" cy="1.5" r="1.4" fill="#fff" stroke="#2a4a78" stroke-width="1"/><circle cx="10.5" cy="7" r="1.4" fill="#fff" stroke="#2a4a78" stroke-width="1"/></svg>
<svg style="left:607px;top:29px" width="15" height="13" viewBox="0 0 15 13"><path d="M1.5 11 Q2 2 10 1.5" stroke="#2a4a78" fill="none" stroke-width="1.1"/><circle cx="1.5" cy="11" r="1.4" fill="#fff" stroke="#2a4a78" stroke-width="1"/><circle cx="10" cy="1.5" r="1.4" fill="#fff" stroke="#2a4a78" stroke-width="1"/></svg>
<svg style="left:628px;top:29px" width="15" height="14" viewBox="0 0 15 14"><path d="M2 2.5 Q2 6 6.5 6.5 Q11 7 11.5 10 M2 10.5 V7 M11.5 1.5 V5" stroke="#2a4a78" fill="none" stroke-width="1.1"/><circle cx="2" cy="2.5" r="1.4" fill="#fff" stroke="#2a4a78" stroke-width="1"/><circle cx="11.5" cy="1.5" r="1.4" fill="#fff" stroke="#2a4a78" stroke-width="1"/><circle cx="2" cy="10.5" r="1.4" fill="#fff" stroke="#2a4a78" stroke-width="1"/><circle cx="11.5" cy="10" r="1.4" fill="#fff" stroke="#2a4a78" stroke-width="1"/></svg>
<div class="a" style="left:649px;top:28px;width:1px;height:14px;background:#505050"></div>
<svg style="left:657px;top:28px" width="17" height="15" viewBox="0 0 17 15"><circle cx="8" cy="8" r="6.8" stroke="#2a4a78" fill="none" stroke-width="1.1"/><circle cx="8" cy="8" r="1.4" fill="#fff" stroke="#2a4a78" stroke-width="1"/><circle cx="13" cy="3" r="1.4" fill="#fff" stroke="#2a4a78" stroke-width="1"/></svg>
<svg style="left:679px;top:28px" width="16" height="15" viewBox="0 0 16 15"><path d="M12 2.5 A6.8 6.8 0 1 0 12 13" stroke="#2a4a78" fill="none" stroke-width="1.1"/><path d="M12 2.5 L7 8 L12 13" stroke="#2a4a78" fill="none" stroke-width="1.1"/><circle cx="12" cy="2.5" r="1.4" fill="#fff" stroke="#2a4a78" stroke-width="1"/><circle cx="7" cy="8" r="1.4" fill="#fff" stroke="#2a4a78" stroke-width="1"/><circle cx="12" cy="13" r="1.4" fill="#fff" stroke="#2a4a78" stroke-width="1"/></svg>
<svg style="left:701px;top:28px" width="17" height="15" viewBox="0 0 17 15"><circle cx="8" cy="8" r="6.8" stroke="#2a4a78" fill="none" stroke-width="1.1"/><circle cx="7" cy="7" r="3.4" stroke="#2a4a78" fill="none" stroke-width="1.1"/><circle cx="13" cy="2.5" r="1.4" fill="#fff" stroke="#2a4a78" stroke-width="1"/><circle cx="9.5" cy="9.5" r="1.4" fill="#fff" stroke="#2a4a78" stroke-width="1"/></svg>
<svg style="left:724px;top:28px" width="15" height="15" viewBox="0 0 15 15"><path d="M11 2.5 A6.8 6.8 0 1 0 10.5 13.5" stroke="#2a4a78" fill="none" stroke-width="1.1"/><path d="M11 2.5 Q6 4 7 8 Q8 11 10.5 10" stroke="#2a4a78" fill="none" stroke-width="1.1"/><circle cx="11" cy="2.5" r="1.4" fill="#fff" stroke="#2a4a78" stroke-width="1"/><circle cx="10.5" cy="9.5" r="1.4" fill="#fff" stroke="#2a4a78" stroke-width="1"/></svg>
<svg style="left:745px;top:28px" width="16" height="15" viewBox="0 0 16 15"><rect x="1.5" y="2" width="11.5" height="11" stroke="#2a4a78" fill="none" stroke-width="1.1"/><circle cx="1.5" cy="13" r="1.4" fill="#fff" stroke="#2a4a78" stroke-width="1"/><circle cx="13" cy="2" r="1.4" fill="#fff" stroke="#2a4a78" stroke-width="1"/></svg>
<svg style="left:768px;top:28px" width="15" height="15" viewBox="0 0 15 15"><path d="M1.5 2.5 L7 1.5 L12 5 L4.5 13 Z M7 1.5 L4.5 13" stroke="#2a4a78" fill="none" stroke-width="1.1"/><circle cx="1.5" cy="2.5" r="1.4" fill="#fff" stroke="#2a4a78" stroke-width="1"/><circle cx="7" cy="1.5" r="1.4" fill="#fff" stroke="#2a4a78" stroke-width="1"/><circle cx="12" cy="5" r="1.4" fill="#fff" stroke="#2a4a78" stroke-width="1"/><circle cx="4.5" cy="13" r="1.4" fill="#fff" stroke="#2a4a78" stroke-width="1"/></svg>
<svg style="left:789px;top:28px" width="17" height="14" viewBox="0 0 17 14"><path d="M1.5 11 L3 3 L10.5 2 L14 8 L7.5 9 Z M3 3 L7.5 9 M10.5 2 L1.5 11" stroke="#2a4a78" fill="none" stroke-width="1.1"/><circle cx="1.5" cy="11" r="1.4" fill="#fff" stroke="#2a4a78" stroke-width="1"/><circle cx="3" cy="3" r="1.4" fill="#fff" stroke="#2a4a78" stroke-width="1"/><circle cx="10.5" cy="2" r="1.4" fill="#fff" stroke="#2a4a78" stroke-width="1"/><circle cx="14" cy="8" r="1.4" fill="#fff" stroke="#2a4a78" stroke-width="1"/><circle cx="7.5" cy="9" r="1.4" fill="#fff" stroke="#2a4a78" stroke-width="1"/></svg>
<svg style="left:810px;top:28px" width="17" height="15" viewBox="0 0 17 15"><ellipse cx="8" cy="8" rx="7" ry="5.5" stroke="#2a4a78" fill="none" stroke-width="1.1"/><circle cx="7.5" cy="2.5" r="1.4" fill="#fff" stroke="#2a4a78" stroke-width="1"/><circle cx="14.5" cy="8.5" r="1.4" fill="#fff" stroke="#2a4a78" stroke-width="1"/></svg>
<div class="a" style="left:833px;top:28px;width:1px;height:14px;background:#505050"></div>
<div class="t" style="left:840px;top:29px;font-size:14px;font-weight:bold;color:#2a4a78;line-height:14px;letter-spacing:-0.5px">Aa</div>
<svg style="left:863px;top:29px" width="16" height="12" viewBox="0 0 16 12"><rect x="0.5" y="0.5" width="15" height="11" fill="#e8eef4" stroke="#a0a8b0"/><rect x="2" y="2" width="12" height="8" fill="url(#gimg)"/><defs><linearGradient id="gimg" x1="0" y1="0" x2="0" y2="1"><stop offset="0" stop-color="#c8e0f8"/><stop offset=".5" stop-color="#4aa0d8"/><stop offset=".7" stop-color="#208050"/><stop offset="1" stop-color="#1850a0"/></linearGradient></defs></svg>
<div class="a" style="left:885px;top:28px;width:1px;height:14px;background:#505050"></div>
<svg style="left:895px;top:28px" width="17" height="15" viewBox="0 0 17 15"><rect x="1" y="1" width="15" height="13" rx="3" fill="#fff" stroke="#1a4a88" stroke-width="1.6"/><text x="8.5" y="10.5" font-size="7.5" font-family="Liberation Sans" text-anchor="middle" fill="#222">OK</text></svg>
<svg style="left:916px;top:34px" width="7" height="4" viewBox="0 0 7 4"><path d="M0 0 H7 L3.5 4Z" fill="#404040"/></svg>
<div class="a" style="left:0px;top:48px;width:1918px;height:26px;background:#535353"></div>
<div class="a" style="left:4px;top:54px;width:1px;height:1px;background:#777;box-shadow:2px 0 0 #777"></div>
<div class="a" style="left:4px;top:57px;width:1px;height:1px;background:#777;box-shadow:2px 0 0 #777"></div>
<div class="a" style="left:4px;top:60px;width:1px;height:1px;background:#777;box-shadow:2px 0 0 #777"></div>
<div class="a" style="left:4px;top:63px;width:1px;height:1px;background:#777;box-shadow:2px 0 0 #777"></div>
<div class="a" style="left:4px;top:66px;width:1px;height:1px;background:#777;box-shadow:2px 0 0 #777"></div>
<div class="t" style="left:17px;top:54px;color:#fff">Файл</div>
<div class="t" style="left:57px;top:54px;color:#fff">Правка</div>
<div class="t" style="left:108px;top:54px;color:#fff">Вид</div>
<div class="t" style="left:143px;top:54px;color:#fff">Редактор</div>
<div class="t" style="left:207px;top:54px;color:#fff">Рабочее пространство</div>
<div class="t" style="left:337px;top:54px;color:#fff">Моделирование</div>
<div class="t" style="left:433px;top:54px;color:#fff">Инструменты</div>
<div class="t" style="left:516px;top:54px;color:#fff">Справка</div>
<div class="t" style="left:1855px;top:54px;color:#fff">...&nbsp;&nbsp;&nbsp;[ NUM ]</div>
<div class="a" style="left:2px;top:74px;width:567px;height:19px;background:linear-gradient(#7e7e7e 0,#737373 40%,#666 100%);border-radius:4px 4px 0 0"></div>
<div class="t" style="left:8px;top:77px;color:#fff">[р] Прорисовка</div>
<svg style="left:524px;top:82px" width="9" height="5" viewBox="0 0 9 5"><path d="M0 0 H9 L4.5 4.5Z" fill="#e8e8e8"/></svg>
<svg style="left:540px;top:78px" width="8" height="11" viewBox="0 0 8 11"><path d="M1.5 0.5 H6.5 V7 H8 V8 H4.5 V11 H3.5 V8 H0 V7 H1.5 Z M2.8 1.5 V7 H5.2 V1.5Z" fill="#e8e8e8" fill-rule="evenodd"/></svg>
<svg style="left:556px;top:79px" width="9" height="9" viewBox="0 0 9 9"><path d="M1 1 L8 8 M8 1 L1 8" stroke="#e8e8e8" stroke-width="2.2"/></svg>
<div class="a" style="left:2px;top:93px;width:567px;height:475px;background:#fff"></div>
<div class="a" style="left:2px;top:93px;width:13px;height:458px;background:#f7f7f7"></div>
<div class="a" style="left:15px;top:93px;width:1px;height:458px;background:#efefef"></div>
<div class="a" style="left:15px;top:93px;width:554px;height:17px;background:linear-gradient(#fff 0,#fff 40%,#f1f2f4 45%,#eeeff2 100%)"></div>
<div class="a" style="left:15px;top:109px;width:554px;height:1px;background:#d8d8d8"></div>
<div class="t" style="left:20px;top:96px;color:#000">Имя</div>
<div class="a" style="left:15px;top:127px;width:554px;height:1px;background:#ececec"></div>
<div class="a" style="left:15px;top:144px;width:554px;height:1px;background:#ececec"></div>
<div class="a" style="left:15px;top:161px;width:554px;height:1px;background:#ececec"></div>
<div class="a" style="left:15px;top:178px;width:554px;height:1px;background:#ececec"></div>
<div class="a" style="left:15px;top:195px;width:554px;height:1px;background:#ececec"></div>
<div class="a" style="left:15px;top:212px;width:554px;height:1px;background:#ececec"></div>
<div class="a" style="left:15px;top:229px;width:554px;height:1px;background:#ececec"></div>
<div class="a" style="left:15px;top:246px;width:554px;height:1px;background:#ececec"></div>
<div class="a" style="left:15px;top:263px;width:554px;height:1px;background:#ececec"></div>
<div class="a" style="left:15px;top:280px;width:554px;height:1px;background:#ececec"></div>
<div class="a" style="left:15px;top:297px;width:554px;height:1px;background:#ececec"></div>
<div class="a" style="left:15px;top:314px;width:554px;height:1px;background:#ececec"></div>
<div class="a" style="left:15px;top:331px;width:554px;height:1px;background:#ececec"></div>
<div class="a" style="left:15px;top:348px;width:554px;height:1px;background:#ececec"></div>
<div class="a" style="left:15px;top:365px;width:554px;height:1px;background:#ececec"></div>
<div class="a" style="left:15px;top:382px;width:554px;height:1px;background:#ececec"></div>
<div class="a" style="left:15px;top:399px;width:554px;height:1px;background:#ececec"></div>
<div class="a" style="left:15px;top:416px;width:554px;height:1px;background:#ececec"></div>
<div class="a" style="left:15px;top:433px;width:554px;height:1px;background:#ececec"></div>
<div class="a" style="left:15px;top:450px;width:554px;height:1px;background:#ececec"></div>
<div class="a" style="left:15px;top:467px;width:554px;height:1px;background:#ececec"></div>
<div class="a" style="left:15px;top:484px;width:554px;height:1px;background:#ececec"></div>
<div class="a" style="left:15px;top:501px;width:554px;height:1px;background:#ececec"></div>
<div class="a" style="left:15px;top:518px;width:554px;height:1px;background:#ececec"></div>
<div class="a" style="left:15px;top:535px;width:554px;height:1px;background:#ececec"></div>
<div class="a" style="left:15px;top:111px;width:13px;height:16px;background:#f7f7f7"></div>
<div class="a" style="left:15px;top:128px;width:24px;height:16px;background:#f7f7f7"></div>
<div class="a" style="left:15px;top:145px;width:36px;height:16px;background:#f7f7f7"></div>
<div class="a" style="left:15px;top:162px;width:47px;height:16px;background:#f7f7f7"></div>
<div class="a" style="left:15px;top:179px;width:58px;height:16px;background:#f7f7f7"></div>
<div class="a" style="left:15px;top:196px;width:47px;height:16px;background:#f7f7f7"></div>
<div class="a" style="left:15px;top:213px;width:58px;height:16px;background:#f7f7f7"></div>
<div class="a" style="left:15px;top:230px;width:69px;height:16px;background:#f7f7f7"></div>
<div class="a" style="left:84px;top:145px;width:485px;height:16px;background:#bfc3cd"></div>
<div class="a" style="left:22px;top:125px;width:1px;height:11px;background:repeating-linear-gradient(#999 0 1px,transparent 1px 2px)"></div>
<div class="a" style="left:23px;top:135px;width:6px;height:1px;background:repeating-linear-gradient(90deg,#999 0 1px,transparent 1px 2px)"></div>
<div class="a" style="left:33px;top:142px;width:1px;height:11px;background:repeating-linear-gradient(#999 0 1px,transparent 1px 2px)"></div>
<div class="a" style="left:34px;top:152px;width:6px;height:1px;background:repeating-linear-gradient(90deg,#999 0 1px,transparent 1px 2px)"></div>
<div class="a" style="left:44px;top:159px;width:1px;height:45px;background:repeating-linear-gradient(#999 0 1px,transparent 1px 2px)"></div>
<div class="a" style="left:45px;top:169px;width:6px;height:1px;background:repeating-linear-gradient(90deg,#999 0 1px,transparent 1px 2px)"></div>
<div class="a" style="left:45px;top:203px;width:6px;height:1px;background:repeating-linear-gradient(90deg,#999 0 1px,transparent 1px 2px)"></div>
<div class="a" style="left:55px;top:176px;width:1px;height:11px;background:repeating-linear-gradient(#999 0 1px,transparent 1px 2px)"></div>
<div class="a" style="left:56px;top:186px;width:13px;height:1px;background:repeating-linear-gradient(90deg,#999 0 1px,transparent 1px 2px)"></div>
<div class="a" style="left:55px;top:210px;width:1px;height:11px;background:repeating-linear-gradient(#999 0 1px,transparent 1px 2px)"></div>
<div class="a" style="left:56px;top:220px;width:6px;height:1px;background:repeating-linear-gradient(90deg,#999 0 1px,transparent 1px 2px)"></div>
<div class="a" style="left:66px;top:227px;width:1px;height:11px;background:repeating-linear-gradient(#999 0 1px,transparent 1px 2px)"></div>
<div class="a" style="left:67px;top:237px;width:13px;height:1px;background:repeating-linear-gradient(90deg,#999 0 1px,transparent 1px 2px)"></div>
<div class="a" style="left:18px;top:114px;width:9px;height:9px;background:linear-gradient(#fff 0,#fff 50%,#ececec 70%,#e0e0e0 100%);border:1px solid #8c8c8c;border-radius:2px"></div>
<div class="a" style="left:20px;top:118px;width:5px;height:1px;background:#3848b0"></div>
<svg style="left:32px;top:113px" width="15" height="12" viewBox="0 0 15 12"><defs><linearGradient id="gwin" x1="0" y1="0" x2="1" y2="1"><stop offset="0" stop-color="#f4f8ff"/><stop offset="1" stop-color="#c8d8f0"/></linearGradient></defs><rect x="2.5" y="0.5" width="11.5" height="9.5" fill="url(#gwin)" stroke="#4a5a78"/><rect x="3" y="1" width="10.5" height="1.6" fill="#4a80d8"/><rect x="0.5" y="3.5" width="5" height="6.5" fill="#f8e090" stroke="#8a98b0"/><rect x="2.5" y="5.5" width="5" height="6" fill="#f4f8ff" stroke="#5a6a88"/><rect x="4" y="7" width="2" height="1" fill="#2050d0"/><rect x="4" y="9" width="2" height="1" fill="#2050d0"/></svg>
<div class="t" style="left:50px;top:113px;font-weight:bold;font-size:12px">menu_mfci_10</div>
<div class="a" style="left:29px;top:131px;width:9px;height:9px;background:linear-gradient(#fff 0,#fff 50%,#ececec 70%,#e0e0e0 100%);border:1px solid #8c8c8c;border-radius:2px"></div>
<div class="a" style="left:31px;top:135px;width:5px;height:1px;background:#3848b0"></div>
<svg style="left:42px;top:129px" width="16" height="14" viewBox="0 0 16 14"><defs><linearGradient id="gmon" x1="0" y1="0" x2="0" y2="1"><stop offset="0" stop-color="#70a8f0"/><stop offset="1" stop-color="#2a68c8"/></linearGradient></defs><rect x="0.5" y="0.5" width="15" height="10.5" rx="1.5" fill="#8a8a8a" stroke="#6a6a6a"/><rect x="1.5" y="1.5" width="13" height="8.5" fill="#cfe4fc"/><rect x="2.5" y="2.5" width="11" height="6.5" fill="url(#gmon)"/><rect x="3.5" y="11.5" width="9" height="2" rx="1" fill="#e8e8e8" stroke="#7a7a7a" stroke-width=".8"/></svg>
<div class="a" style="left:61px;top:130px;width:11px;height:11px;background:linear-gradient(135deg,#dcdcdc 0,#f0f0f0 40%,#fff 70%);border:1px solid #1e4a80"></div>
<svg style="left:61.5px;top:130.5px" width="10" height="10" viewBox="0 0 10 10"><path d="M1.3 4.6 L3.9 8 L8.8 1.4" stroke="#2a3a8a" stroke-width="2.1" fill="none"/></svg>
<div class="t" style="left:75px;top:130px;font-weight:bold;font-size:12px">Задача</div>
<div class="a" style="left:40px;top:148px;width:9px;height:9px;background:linear-gradient(#fff 0,#fff 50%,#ececec 70%,#e0e0e0 100%);border:1px solid #8c8c8c;border-radius:2px"></div>
<div class="a" style="left:42px;top:152px;width:5px;height:1px;background:#3848b0"></div>
<svg style="left:53px;top:146px" width="16" height="13" viewBox="0 0 16 13"><path d="M1 1.5 H6 L7.5 3 H13.5 V11 H1Z" fill="#f8e8a8" stroke="#b09040" stroke-width=".8"/><path d="M3.5 5.5 H15.5 L12.5 12.5 H0.5Z" fill="url(#gfold)" stroke="#907020" stroke-width=".8"/><defs><linearGradient id="gfold" x1="0" y1="0" x2="0" y2="1"><stop offset="0" stop-color="#ffe898"/><stop offset="1" stop-color="#e8a820"/></linearGradient></defs></svg>
<div class="a" style="left:72px;top:147px;width:11px;height:11px;background:linear-gradient(135deg,#dcdcdc 0,#f0f0f0 40%,#fff 70%);border:1px solid #1e4a80"></div>
<svg style="left:72.5px;top:147.5px" width="10" height="10" viewBox="0 0 10 10"><path d="M1.3 4.6 L3.9 8 L8.8 1.4" stroke="#2a3a8a" stroke-width="2.1" fill="none"/></svg>
<div class="t" style="left:86px;top:147px;">Меню МФЦИ 10</div>
<div class="a" style="left:51px;top:165px;width:9px;height:9px;background:linear-gradient(#fff 0,#fff 50%,#ececec 70%,#e0e0e0 100%);border:1px solid #8c8c8c;border-radius:2px"></div>
<div class="a" style="left:53px;top:169px;width:5px;height:1px;background:#3848b0"></div>
<svg style="left:64px;top:163px" width="16" height="13" viewBox="0 0 16 13"><path d="M1 1.5 H6 L7.5 3 H13.5 V11 H1Z" fill="#f8e8a8" stroke="#b09040" stroke-width=".8"/><path d="M3.5 5.5 H15.5 L12.5 12.5 H0.5Z" fill="url(#gfold)" stroke="#907020" stroke-width=".8"/><defs><linearGradient id="gfold" x1="0" y1="0" x2="0" y2="1"><stop offset="0" stop-color="#ffe898"/><stop offset="1" stop-color="#e8a820"/></linearGradient></defs></svg>
<div class="a" style="left:83px;top:164px;width:11px;height:11px;background:linear-gradient(135deg,#dcdcdc 0,#f0f0f0 40%,#fff 70%);border:1px solid #1e4a80"></div>
<svg style="left:83.5px;top:164.5px" width="10" height="10" viewBox="0 0 10 10"><path d="M1.3 4.6 L3.9 8 L8.8 1.4" stroke="#2a3a8a" stroke-width="2.1" fill="none"/></svg>
<div class="t" style="left:97px;top:164px;">Потом удалить</div>
<svg style="left:77px;top:180px" width="14" height="14" viewBox="0 0 14 14"><path d="M2 2.5 H12 V12.5 H2Z" fill="none" stroke="#2a4a78" stroke-width="1.3"/><circle cx="12" cy="2.5" r="1.4" fill="#fff" stroke="#2a4a78"/><circle cx="2" cy="12.5" r="1.4" fill="#fff" stroke="#2a4a78"/></svg>
<div class="a" style="left:94px;top:181px;width:11px;height:11px;background:linear-gradient(135deg,#dcdcdc 0,#f0f0f0 40%,#fff 70%);border:1px solid #1e4a80"></div>
<svg style="left:94.5px;top:181.5px" width="10" height="10" viewBox="0 0 10 10"><path d="M1.3 4.6 L3.9 8 L8.8 1.4" stroke="#2a3a8a" stroke-width="2.1" fill="none"/></svg>
<div class="t" style="left:108px;top:181px;">Прямоугольник</div>
<div class="a" style="left:51px;top:199px;width:9px;height:9px;background:linear-gradient(#fff 0,#fff 50%,#ececec 70%,#e0e0e0 100%);border:1px solid #8c8c8c;border-radius:2px"></div>
<div class="a" style="left:53px;top:203px;width:5px;height:1px;background:#3848b0"></div>
<svg style="left:64px;top:197px" width="16" height="13" viewBox="0 0 16 13"><path d="M1 1.5 H6 L7.5 3 H13.5 V11 H1Z" fill="#f8e8a8" stroke="#b09040" stroke-width=".8"/><path d="M3.5 5.5 H15.5 L12.5 12.5 H0.5Z" fill="url(#gfold)" stroke="#907020" stroke-width=".8"/><defs><linearGradient id="gfold" x1="0" y1="0" x2="0" y2="1"><stop offset="0" stop-color="#ffe898"/><stop offset="1" stop-color="#e8a820"/></linearGradient></defs></svg>
<div class="a" style="left:83px;top:198px;width:11px;height:11px;background:linear-gradient(135deg,#dcdcdc 0,#f0f0f0 40%,#fff 70%);border:1px solid #1e4a80"></div>
<svg style="left:83.5px;top:198.5px" width="10" height="10" viewBox="0 0 10 10"><path d="M1.3 4.6 L3.9 8 L8.8 1.4" stroke="#2a3a8a" stroke-width="2.1" fill="none"/></svg>
<div class="t" style="left:97px;top:198px;">Верхние кнопки</div>
<div class="a" style="left:62px;top:216px;width:9px;height:9px;background:linear-gradient(#fff 0,#fff 50%,#ececec 70%,#e0e0e0 100%);border:1px solid #8c8c8c;border-radius:2px"></div>
<div class="a" style="left:64px;top:220px;width:5px;height:1px;background:#3848b0"></div>
<svg style="left:75px;top:214px" width="16" height="13" viewBox="0 0 16 13"><path d="M1 1.5 H6 L7.5 3 H13.5 V11 H1Z" fill="#f8e8a8" stroke="#b09040" stroke-width=".8"/><path d="M3.5 5.5 H15.5 L12.5 12.5 H0.5Z" fill="url(#gfold)" stroke="#907020" stroke-width=".8"/><defs><linearGradient id="gfold" x1="0" y1="0" x2="0" y2="1"><stop offset="0" stop-color="#ffe898"/><stop offset="1" stop-color="#e8a820"/></linearGradient></defs></svg>
<div class="a" style="left:94px;top:215px;width:11px;height:11px;background:linear-gradient(135deg,#dcdcdc 0,#f0f0f0 40%,#fff 70%);border:1px solid #1e4a80"></div>
<svg style="left:94.5px;top:215.5px" width="10" height="10" viewBox="0 0 10 10"><path d="M1.3 4.6 L3.9 8 L8.8 1.4" stroke="#2a3a8a" stroke-width="2.1" fill="none"/></svg>
<div class="t" style="left:108px;top:215px;">Группа</div>
<svg style="left:88px;top:231px" width="14" height="14" viewBox="0 0 14 14"><path d="M2 2.5 H12 V12.5 H2Z" fill="none" stroke="#2a4a78" stroke-width="1.3"/><circle cx="12" cy="2.5" r="1.4" fill="#fff" stroke="#2a4a78"/><circle cx="2" cy="12.5" r="1.4" fill="#fff" stroke="#2a4a78"/></svg>
<div class="a" style="left:105px;top:232px;width:11px;height:11px;background:linear-gradient(135deg,#dcdcdc 0,#f0f0f0 40%,#fff 70%);border:1px solid #1e4a80"></div>
<svg style="left:105.5px;top:232.5px" width="10" height="10" viewBox="0 0 10 10"><path d="M1.3 4.6 L3.9 8 L8.8 1.4" stroke="#2a3a8a" stroke-width="2.1" fill="none"/></svg>
<div class="t" style="left:119px;top:232px;">Прямоугольник</div>
<div class="a" style="left:2px;top:551px;width:567px;height:17px;background:#ececec"></div>
<svg style="left:8px;top:556px" width="4" height="7" viewBox="0 0 4 7"><path d="M4 0 V7 L0 3.5Z" fill="#303030"/></svg>
<svg style="left:559px;top:556px" width="4" height="7" viewBox="0 0 4 7"><path d="M0 0 V7 L4 3.5Z" fill="#303030"/></svg>
<div class="a" style="left:20px;top:552px;width:283px;height:15px;background:linear-gradient(#f4f4f4 0,#e8e8e8 45%,#d4d4d8 55%,#c8c8cc 100%);border:1px solid #9a9a9a;border-radius:2px"></div>
<div class="a" style="left:158px;top:556px;width:1px;height:7px;background:#555"></div>
<div class="a" style="left:160px;top:556px;width:1px;height:7px;background:#555"></div>
<div class="a" style="left:162px;top:556px;width:1px;height:7px;background:#555"></div>
<div class="a" style="left:2px;top:574px;width:567px;height:19px;background:linear-gradient(#fff4d8 0,#fde8b8 50%,#f9d890 100%);border-radius:4px 4px 0 0"></div>
<div class="t" style="left:8px;top:577px;color:#000">[с] Входные переменные</div>
<svg style="left:524px;top:582px" width="9" height="5" viewBox="0 0 9 5"><path d="M0 0 H9 L4.5 4.5Z" fill="#5e5030"/></svg>
<svg style="left:540px;top:578px" width="8" height="11" viewBox="0 0 8 11"><path d="M1.5 0.5 H6.5 V7 H8 V8 H4.5 V11 H3.5 V8 H0 V7 H1.5 Z M2.8 1.5 V7 H5.2 V1.5Z" fill="#5e5030" fill-rule="evenodd"/></svg>
<svg style="left:556px;top:579px" width="9" height="9" viewBox="0 0 9 9"><path d="M1 1 L8 8 M8 1 L1 8" stroke="#5e5030" stroke-width="2.2"/></svg>
<div class="a" style="left:2px;top:593px;width:567px;height:384px;background:#fff"></div>
<div class="a" style="left:2px;top:593px;width:13px;height:367px;background:#f7f7f7"></div>
<div class="a" style="left:15px;top:593px;width:554px;height:17px;background:linear-gradient(#fff 0,#fff 40%,#f1f2f4 45%,#eeeff2 100%)"></div>
<div class="a" style="left:15px;top:609px;width:554px;height:1px;background:#d8d8d8"></div>
<div class="a" style="left:302px;top:593px;width:1px;height:367px;background:#e4e4e4"></div>
<div class="a" style="left:317px;top:593px;width:1px;height:367px;background:#e4e4e4"></div>
<div class="t" style="left:20px;top:596px;">Имя</div>
<div class="t" style="left:309px;top:596px;font-style:italic">/</div>
<div class="t" style="left:323px;top:596px;">Описание</div>
<div class="a" style="left:15px;top:627px;width:554px;height:1px;background:#ececec"></div>
<div class="a" style="left:15px;top:644px;width:554px;height:1px;background:#ececec"></div>
<div class="a" style="left:15px;top:661px;width:554px;height:1px;background:#ececec"></div>
<div class="a" style="left:15px;top:678px;width:554px;height:1px;background:#ececec"></div>
<div class="a" style="left:15px;top:695px;width:554px;height:1px;background:#ececec"></div>
<div class="a" style="left:15px;top:712px;width:554px;height:1px;background:#ececec"></div>
<div class="a" style="left:15px;top:729px;width:554px;height:1px;background:#ececec"></div>
<div class="a" style="left:15px;top:746px;width:554px;height:1px;background:#ececec"></div>
<div class="a" style="left:15px;top:763px;width:554px;height:1px;background:#ececec"></div>
<div class="a" style="left:15px;top:780px;width:554px;height:1px;background:#ececec"></div>
<div class="a" style="left:15px;top:797px;width:554px;height:1px;background:#ececec"></div>
<div class="a" style="left:15px;top:814px;width:554px;height:1px;background:#ececec"></div>
<div class="a" style="left:15px;top:831px;width:554px;height:1px;background:#ececec"></div>
<div class="a" style="left:15px;top:848px;width:554px;height:1px;background:#ececec"></div>
<div class="a" style="left:15px;top:865px;width:554px;height:1px;background:#ececec"></div>
<div class="a" style="left:15px;top:882px;width:554px;height:1px;background:#ececec"></div>
<div class="a" style="left:15px;top:899px;width:554px;height:1px;background:#ececec"></div>
<div class="a" style="left:15px;top:916px;width:554px;height:1px;background:#ececec"></div>
<div class="a" style="left:15px;top:933px;width:554px;height:1px;background:#ececec"></div>
<div class="a" style="left:15px;top:950px;width:554px;height:1px;background:#ececec"></div>
<div class="a" style="left:15px;top:611px;width:13px;height:16px;background:#f7f7f7"></div>
<div class="a" style="left:15px;top:628px;width:24px;height:16px;background:#f7f7f7"></div>
<div class="a" style="left:15px;top:645px;width:36px;height:16px;background:#f7f7f7"></div>
<div class="a" style="left:84px;top:645px;width:218px;height:16px;background:#f2c584"></div>
<div class="a" style="left:303px;top:645px;width:14px;height:16px;background:#f2c584"></div>
<div class="a" style="left:318px;top:645px;width:251px;height:16px;background:#f2c584"></div>
<div class="a" style="left:22px;top:625px;width:1px;height:11px;background:repeating-linear-gradient(#999 0 1px,transparent 1px 2px)"></div>
<div class="a" style="left:23px;top:635px;width:6px;height:1px;background:repeating-linear-gradient(90deg,#999 0 1px,transparent 1px 2px)"></div>
<div class="a" style="left:33px;top:642px;width:1px;height:11px;background:repeating-linear-gradient(#999 0 1px,transparent 1px 2px)"></div>
<div class="a" style="left:34px;top:652px;width:16px;height:1px;background:repeating-linear-gradient(90deg,#999 0 1px,transparent 1px 2px)"></div>
<div class="a" style="left:18px;top:614px;width:9px;height:9px;background:linear-gradient(#fff 0,#fff 50%,#ececec 70%,#e0e0e0 100%);border:1px solid #8c8c8c;border-radius:2px"></div>
<div class="a" style="left:20px;top:618px;width:5px;height:1px;background:#3848b0"></div>
<svg style="left:32px;top:613px" width="15" height="12" viewBox="0 0 15 12"><defs><linearGradient id="gwin" x1="0" y1="0" x2="1" y2="1"><stop offset="0" stop-color="#f4f8ff"/><stop offset="1" stop-color="#c8d8f0"/></linearGradient></defs><rect x="2.5" y="0.5" width="11.5" height="9.5" fill="url(#gwin)" stroke="#4a5a78"/><rect x="3" y="1" width="10.5" height="1.6" fill="#4a80d8"/><rect x="0.5" y="3.5" width="5" height="6.5" fill="#f8e090" stroke="#8a98b0"/><rect x="2.5" y="5.5" width="5" height="6" fill="#f4f8ff" stroke="#5a6a88"/><rect x="4" y="7" width="2" height="1" fill="#2050d0"/><rect x="4" y="9" width="2" height="1" fill="#2050d0"/></svg>
<div class="t" style="left:50px;top:613px;font-weight:bold;font-size:12px">menu_mfci_10</div>
<div class="a" style="left:29px;top:631px;width:9px;height:9px;background:linear-gradient(#fff 0,#fff 50%,#ececec 70%,#e0e0e0 100%);border:1px solid #8c8c8c;border-radius:2px"></div>
<div class="a" style="left:31px;top:635px;width:5px;height:1px;background:#3848b0"></div>
<svg style="left:42px;top:629px" width="16" height="14" viewBox="0 0 16 14"><defs><linearGradient id="gmon" x1="0" y1="0" x2="0" y2="1"><stop offset="0" stop-color="#70a8f0"/><stop offset="1" stop-color="#2a68c8"/></linearGradient></defs><rect x="0.5" y="0.5" width="15" height="10.5" rx="1.5" fill="#8a8a8a" stroke="#6a6a6a"/><rect x="1.5" y="1.5" width="13" height="8.5" fill="#cfe4fc"/><rect x="2.5" y="2.5" width="11" height="6.5" fill="url(#gmon)"/><rect x="3.5" y="11.5" width="9" height="2" rx="1" fill="#e8e8e8" stroke="#7a7a7a" stroke-width=".8"/></svg>
<div class="t" style="left:61px;top:630px;font-weight:bold;font-size:12px">Задача</div>
<svg style="left:54px;top:648px" width="9" height="9" viewBox="0 0 9 9"><path d="M4.5 0.5 L8.5 4.5 L4.5 8.5 L0.5 4.5Z" fill="#f0a0f0" stroke="#c050c0" stroke-width=".8"/></svg>
<div class="t" style="left:64px;top:646px;font-style:italic;font-size:13px;font-family:'Liberation Serif'">i</div>
<div class="a" style="left:72px;top:647px;width:11px;height:11px;background:linear-gradient(135deg,#dcdcdc 0,#f0f0f0 40%,#fff 70%);border:1px solid #1e4a80"></div>
<svg style="left:72.5px;top:647.5px" width="10" height="10" viewBox="0 0 10 10"><path d="M1.3 4.6 L3.9 8 L8.8 1.4" stroke="#2a3a8a" stroke-width="2.1" fill="none"/></svg>
<div class="t" style="left:86px;top:647px;">Int1 [8] = 4, 50, 60</div>
<div class="a" style="left:2px;top:960px;width:567px;height:17px;background:#ececec"></div>
<svg style="left:8px;top:965px" width="4" height="7" viewBox="0 0 4 7"><path d="M4 0 V7 L0 3.5Z" fill="#303030"/></svg>
<svg style="left:559px;top:965px" width="4" height="7" viewBox="0 0 4 7"><path d="M0 0 V7 L4 3.5Z" fill="#303030"/></svg>
<div class="a" style="left:20px;top:961px;width:446px;height:15px;background:linear-gradient(#f4f4f4 0,#e8e8e8 45%,#d4d4d8 55%,#c8c8cc 100%);border:1px solid #9a9a9a;border-radius:2px"></div>
<div class="a" style="left:240px;top:965px;width:1px;height:7px;background:#555"></div>
<div class="a" style="left:242px;top:965px;width:1px;height:7px;background:#555"></div>
<div class="a" style="left:244px;top:965px;width:1px;height:7px;background:#555"></div>
<div class="a" style="left:185px;top:978px;width:155px;height:19px;background:#fff;border-radius:0 0 3px 3px"></div>
<svg style="left:8px;top:980px" width="15" height="15" viewBox="0 0 15 15"><path d="M0 3 H4.2 V0.8 Q5.9 -0.6 7.6 0.8 V3 H10.8 V5.9 H13 Q14.3 8 13 10 H10.8 V13.8 H7 V12.5 H4.9 V13.8 H0 V9 H1.5 V7 H0 Z" fill="#5cc05c" stroke="#3a9a3a" stroke-width=".7"/><path d="M2 5 H9 V12 H2Z" fill="#58b458" stroke="#a8dca8" stroke-width=".9"/></svg>
<div class="t" style="left:25px;top:981px;color:#fff;letter-spacing:-0.25px">Расширения - CGFormatPro 2.X</div>
<svg style="left:189px;top:979px" width="18" height="17" viewBox="0 0 18 17"><path d="M6.4 0.1 L10.5 4.5 L5 9.3 L1.3 5.7Z" fill="#f4a8f4" stroke="#b040b8" stroke-width=".8"/><path d="M12.5 3.9 L16.7 8.4 L13.5 11.8 L9.5 7.2Z" fill="#f4a8f4" stroke="#b040b8" stroke-width=".8"/><path d="M8.4 8.4 L11.6 11.4 L7.4 15.6 L4 12.6Z" fill="#f4a8f4" stroke="#b040b8" stroke-width=".8"/></svg>
<div class="t" style="left:208px;top:981px;">[с] Входные переменные</div>
<svg style="left:344px;top:979px" width="18" height="17" viewBox="0 0 18 17"><path d="M6.4 0.1 L10.5 4.5 L5 9.3 L1.3 5.7Z" fill="#50e050" stroke="#107010" stroke-width=".8"/><path d="M12.5 3.9 L16.7 8.4 L13.5 11.8 L9.5 7.2Z" fill="#50e050" stroke="#107010" stroke-width=".8"/><path d="M8.4 8.4 L11.6 11.4 L7.4 15.6 L4 12.6Z" fill="#50e050" stroke="#107010" stroke-width=".8"/></svg>
<div class="t" style="left:363px;top:981px;color:#fff">Выходные переменные</div>
<div class="a" style="left:2px;top:1003px;width:20px;height:155px;background:linear-gradient(90deg,#7c7c7c,#606060);border-radius:4px 0 0 4px"></div>
<svg style="left:7px;top:1007px" width="9" height="9" viewBox="0 0 9 9"><path d="M1 1 L8 8 M8 1 L1 8" stroke="#e8e8e8" stroke-width="2.2"/></svg>
<svg style="left:8px;top:1023px" width="8" height="11" viewBox="0 0 8 11"><path d="M1.5 0.5 H6.5 V7 H8 V8 H4.5 V11 H3.5 V8 H0 V7 H1.5 Z M2.8 1.5 V7 H5.2 V1.5Z" fill="#e8e8e8" fill-rule="evenodd"/></svg>
<svg style="left:7px;top:1043px" width="9" height="5" viewBox="0 0 9 5"><path d="M0 0 H9 L4.5 4.5Z" fill="#e8e8e8"/></svg>
<div class="t" style="left:5px;top:1152px;color:#fff;transform:rotate(-90deg);transform-origin:0 0">Вывод</div>
<div class="a" style="left:22px;top:1003px;width:1284px;height:155px;background:#fff"></div>
<div class="a" style="left:22px;top:1003px;width:15px;height:138px;background:#f0f0f0"></div>
<div class="a" style="left:22px;top:1141px;width:1284px;height:17px;background:#ececec"></div>
<svg style="left:28px;top:1146px" width="4" height="7" viewBox="0 0 4 7"><path d="M4 0 V7 L0 3.5Z" fill="#303030"/></svg>
<svg style="left:1296px;top:1146px" width="4" height="7" viewBox="0 0 4 7"><path d="M0 0 V7 L4 3.5Z" fill="#303030"/></svg>
<div class="a" style="left:39px;top:1142px;width:789px;height:15px;background:linear-gradient(#f4f4f4 0,#e8e8e8 45%,#d4d4d8 55%,#c8c8cc 100%);border:1px solid #9a9a9a;border-radius:2px"></div>
<div class="a" style="left:430px;top:1146px;width:1px;height:7px;background:#555"></div>
<div class="a" style="left:432px;top:1146px;width:1px;height:7px;background:#555"></div>
<div class="a" style="left:434px;top:1146px;width:1px;height:7px;background:#555"></div>
<div class="a" style="left:575px;top:74px;width:78px;height:26px;background:linear-gradient(#fbfcfd 0,#eceef3 40%,#d6dbe6 100%);border-radius:4px 4px 0 0"></div>
<div class="a" style="left:575px;top:97px;width:731px;height:3px;background:#d6dce8"></div>
<svg style="left:580px;top:79px" width="16" height="15" viewBox="0 0 16 15"><rect x="0.5" y="0.5" width="15" height="14" rx="2" fill="#eee" stroke="#777"/><rect x="2" y="2" width="12" height="11" fill="url(#gedt)"/><path d="M2.5 5 L13 11 L4.5 12.5Z" fill="none" stroke="#e8eef8" stroke-width="1.3"/><defs><linearGradient id="gedt" x1="0" y1="0" x2="0" y2="1"><stop offset="0" stop-color="#5aa0e8"/><stop offset="1" stop-color="#1a5ab8"/></linearGradient></defs></svg>
<div class="t" style="left:598px;top:80px;font-size:11.3px">Редактор</div>
<svg style="left:660px;top:80px" width="13" height="13" viewBox="0 0 13 13"><path d="M6.5 0.5 L12.5 6 H11 V12.5 H2 V6 H0.5Z" fill="#f8e8d8" stroke="#603820" stroke-width=".9"/><rect x="5" y="8" width="3" height="4.5" fill="#d06020"/><rect x="5" y="3.5" width="3" height="2.5" fill="#a0c0e0"/></svg>
<div class="t" style="left:676px;top:80px;color:#fff;font-size:11px">Начальная страница</div>
<svg style="left:1239px;top:80px" width="6" height="10" viewBox="0 0 6 10"><path d="M5.5 0.5 V9.5 L0.5 5Z M4 3 V7 L2 5Z" fill="#e8e8e8" fill-rule="evenodd"/></svg>
<svg style="left:1254px;top:80px" width="6" height="10" viewBox="0 0 6 10"><path d="M0.5 0.5 V9.5 L5.5 5Z M2 3 V7 L4 5Z" fill="#e8e8e8" fill-rule="evenodd"/></svg>
<svg style="left:1274px;top:84px" width="9" height="5" viewBox="0 0 9 5"><path d="M0 0 H9 L4.5 4.5Z" fill="#e8e8e8"/></svg>
<svg style="left:1290px;top:81px" width="9" height="9" viewBox="0 0 9 9"><path d="M1 1 L8 8 M8 1 L1 8" stroke="#e8e8e8" stroke-width="2.2"/></svg>
<div class="a" style="left:575px;top:100px;width:731px;height:223px;background:#171717"></div>
<div class="a" style="left:661px;top:100px;width:645px;height:223px;background-color:#171717;background-image:repeating-linear-gradient(90deg,#3a3a3a 0 1px,transparent 1px 28px),repeating-linear-gradient(#3a3a3a 0 1px,transparent 1px 28px);background-position:0 0,0 17px"></div>
<div class="a" style="left:661px;top:100px;width:1px;height:223px;background:#555"></div>
<div class="a" style="left:941px;top:100px;width:1px;height:223px;background:#505050"></div>
<div class="a" style="left:1221px;top:100px;width:1px;height:223px;background:#505050"></div>
<div class="a" style="left:575px;top:323px;width:731px;height:644px;background-color:#000;background-image:repeating-conic-gradient(#181818 0 25%,#000 0 50%);background-size:6px 6px"></div>
<div class="a" style="left:661px;top:323px;width:1px;height:644px;background:repeating-linear-gradient(#2c2c2c 0 2px,transparent 2px 3px)"></div>
<div class="a" style="left:689px;top:323px;width:1px;height:644px;background:repeating-linear-gradient(#2c2c2c 0 2px,transparent 2px 3px)"></div>
<div class="a" style="left:717px;top:323px;width:1px;height:644px;background:repeating-linear-gradient(#2c2c2c 0 2px,transparent 2px 3px)"></div>
<div class="a" style="left:745px;top:323px;width:1px;height:644px;background:repeating-linear-gradient(#2c2c2c 0 2px,transparent 2px 3px)"></div>
<div class="a" style="left:773px;top:323px;width:1px;height:644px;background:repeating-linear-gradient(#2c2c2c 0 2px,transparent 2px 3px)"></div>
<div class="a" style="left:801px;top:323px;width:1px;height:644px;background:repeating-linear-gradient(#2c2c2c 0 2px,transparent 2px 3px)"></div>
<div class="a" style="left:829px;top:323px;width:1px;height:644px;background:repeating-linear-gradient(#2c2c2c 0 2px,transparent 2px 3px)"></div>
<div class="a" style="left:857px;top:323px;width:1px;height:644px;background:repeating-linear-gradient(#2c2c2c 0 2px,transparent 2px 3px)"></div>
<div class="a" style="left:885px;top:323px;width:1px;height:644px;background:repeating-linear-gradient(#2c2c2c 0 2px,transparent 2px 3px)"></div>
<div class="a" style="left:913px;top:323px;width:1px;height:644px;background:repeating-linear-gradient(#2c2c2c 0 2px,transparent 2px 3px)"></div>
<div class="a" style="left:941px;top:323px;width:1px;height:644px;background:repeating-linear-gradient(#2c2c2c 0 2px,transparent 2px 3px)"></div>
<div class="a" style="left:969px;top:323px;width:1px;height:644px;background:repeating-linear-gradient(#2c2c2c 0 2px,transparent 2px 3px)"></div>
<div class="a" style="left:997px;top:323px;width:1px;height:644px;background:repeating-linear-gradient(#2c2c2c 0 2px,transparent 2px 3px)"></div>
<div class="a" style="left:1025px;top:323px;width:1px;height:644px;background:repeating-linear-gradient(#2c2c2c 0 2px,transparent 2px 3px)"></div>
<div class="a" style="left:1053px;top:323px;width:1px;height:644px;background:repeating-linear-gradient(#2c2c2c 0 2px,transparent 2px 3px)"></div>
<div class="a" style="left:1081px;top:323px;width:1px;height:644px;background:repeating-linear-gradient(#2c2c2c 0 2px,transparent 2px 3px)"></div>
<div class="a" style="left:1109px;top:323px;width:1px;height:644px;background:repeating-linear-gradient(#2c2c2c 0 2px,transparent 2px 3px)"></div>
<div class="a" style="left:1137px;top:323px;width:1px;height:644px;background:repeating-linear-gradient(#2c2c2c 0 2px,transparent 2px 3px)"></div>
<div class="a" style="left:1165px;top:323px;width:1px;height:644px;background:repeating-linear-gradient(#2c2c2c 0 2px,transparent 2px 3px)"></div>
<div class="a" style="left:1193px;top:323px;width:1px;height:644px;background:repeating-linear-gradient(#2c2c2c 0 2px,transparent 2px 3px)"></div>
<div class="a" style="left:1221px;top:323px;width:1px;height:644px;background:repeating-linear-gradient(#2c2c2c 0 2px,transparent 2px 3px)"></div>
<div class="a" style="left:1249px;top:323px;width:1px;height:644px;background:repeating-linear-gradient(#2c2c2c 0 2px,transparent 2px 3px)"></div>
<div class="a" style="left:1277px;top:323px;width:1px;height:644px;background:repeating-linear-gradient(#2c2c2c 0 2px,transparent 2px 3px)"></div>
<div class="a" style="left:1305px;top:323px;width:1px;height:644px;background:repeating-linear-gradient(#2c2c2c 0 2px,transparent 2px 3px)"></div>
<div class="a" style="left:661px;top:341px;width:645px;height:1px;background:repeating-linear-gradient(90deg,#2c2c2c 0 2px,transparent 2px 3px)"></div>
<div class="a" style="left:661px;top:369px;width:645px;height:1px;background:repeating-linear-gradient(90deg,#2c2c2c 0 2px,transparent 2px 3px)"></div>
<div class="a" style="left:661px;top:397px;width:645px;height:1px;background:repeating-linear-gradient(90deg,#2c2c2c 0 2px,transparent 2px 3px)"></div>
<div class="a" style="left:661px;top:425px;width:645px;height:1px;background:repeating-linear-gradient(90deg,#2c2c2c 0 2px,transparent 2px 3px)"></div>
<div class="a" style="left:661px;top:453px;width:645px;height:1px;background:repeating-linear-gradient(90deg,#2c2c2c 0 2px,transparent 2px 3px)"></div>
<div class="a" style="left:661px;top:481px;width:645px;height:1px;background:repeating-linear-gradient(90deg,#2c2c2c 0 2px,transparent 2px 3px)"></div>
<div class="a" style="left:661px;top:509px;width:645px;height:1px;background:repeating-linear-gradient(90deg,#2c2c2c 0 2px,transparent 2px 3px)"></div>
<div class="a" style="left:661px;top:537px;width:645px;height:1px;background:repeating-linear-gradient(90deg,#2c2c2c 0 2px,transparent 2px 3px)"></div>
<div class="a" style="left:661px;top:565px;width:645px;height:1px;background:repeating-linear-gradient(90deg,#2c2c2c 0 2px,transparent 2px 3px)"></div>
<div class="a" style="left:661px;top:593px;width:645px;height:1px;background:repeating-linear-gradient(90deg,#2c2c2c 0 2px,transparent 2px 3px)"></div>
<div class="a" style="left:661px;top:621px;width:645px;height:1px;background:repeating-linear-gradient(90deg,#2c2c2c 0 2px,transparent 2px 3px)"></div>
<div class="a" style="left:661px;top:649px;width:645px;height:1px;background:repeating-linear-gradient(90deg,#2c2c2c 0 2px,transparent 2px 3px)"></div>
<div class="a" style="left:661px;top:677px;width:645px;height:1px;background:repeating-linear-gradient(90deg,#2c2c2c 0 2px,transparent 2px 3px)"></div>
<div class="a" style="left:661px;top:705px;width:645px;height:1px;background:repeating-linear-gradient(90deg,#2c2c2c 0 2px,transparent 2px 3px)"></div>
<div class="a" style="left:661px;top:733px;width:645px;height:1px;background:repeating-linear-gradient(90deg,#2c2c2c 0 2px,transparent 2px 3px)"></div>
<div class="a" style="left:661px;top:761px;width:645px;height:1px;background:repeating-linear-gradient(90deg,#2c2c2c 0 2px,transparent 2px 3px)"></div>
<div class="a" style="left:661px;top:789px;width:645px;height:1px;background:repeating-linear-gradient(90deg,#2c2c2c 0 2px,transparent 2px 3px)"></div>
<div class="a" style="left:661px;top:817px;width:645px;height:1px;background:repeating-linear-gradient(90deg,#2c2c2c 0 2px,transparent 2px 3px)"></div>
<div class="a" style="left:661px;top:845px;width:645px;height:1px;background:repeating-linear-gradient(90deg,#2c2c2c 0 2px,transparent 2px 3px)"></div>
<div class="a" style="left:661px;top:873px;width:645px;height:1px;background:repeating-linear-gradient(90deg,#2c2c2c 0 2px,transparent 2px 3px)"></div>
<div class="a" style="left:661px;top:901px;width:645px;height:1px;background:repeating-linear-gradient(90deg,#2c2c2c 0 2px,transparent 2px 3px)"></div>
<div class="a" style="left:661px;top:929px;width:645px;height:1px;background:repeating-linear-gradient(90deg,#2c2c2c 0 2px,transparent 2px 3px)"></div>
<div class="a" style="left:661px;top:957px;width:645px;height:1px;background:repeating-linear-gradient(90deg,#2c2c2c 0 2px,transparent 2px 3px)"></div>
<div class="a" style="left:661px;top:323px;width:1px;height:644px;background:repeating-linear-gradient(#5a5a5a 0 2px,transparent 2px 4px)"></div>
<div class="a" style="left:1221px;top:323px;width:1px;height:644px;background:repeating-linear-gradient(#5a5a5a 0 2px,transparent 2px 4px)"></div>
<div class="a" style="left:661px;top:341px;width:645px;height:1px;background:repeating-linear-gradient(90deg,#5a5a5a 0 3px,transparent 3px 6px)"></div>
<div class="a" style="left:661px;top:621px;width:645px;height:1px;background:repeating-linear-gradient(90deg,#5a5a5a 0 3px,transparent 3px 6px)"></div>
<div class="a" style="left:661px;top:901px;width:645px;height:1px;background:repeating-linear-gradient(90deg,#5a5a5a 0 3px,transparent 3px 6px)"></div>
<div class="a" style="left:941px;top:465px;width:1px;height:502px;background:repeating-linear-gradient(#a090a8 0 4px,transparent 4px 7px)"></div>
<div class="a" style="left:941px;top:323px;width:1px;height:142px;background:repeating-linear-gradient(#2c2c2c 0 2px,transparent 2px 3px)"></div>
<div class="a" style="left:842px;top:323px;width:196px;height:70px;background:#a89cae"></div>
<div class="a" style="left:577px;top:576px;width:16px;height:1px;background:#fff"></div>
<div class="a" style="left:600px;top:576px;width:16px;height:1px;background:#fff"></div>
<div class="a" style="left:596px;top:557px;width:1px;height:16px;background:#fff"></div>
<div class="a" style="left:596px;top:580px;width:1px;height:16px;background:#fff"></div>
<div class="a" style="left:593px;top:573px;width:7px;height:7px;background:transparent;border:1px solid #fff"></div>
<div class="a" style="left:606px;top:586px;width:86px;height:31px;background:#2e2e2e;border:1px solid #a8a8a8"></div>
<div class="t" style="left:609px;top:589px;color:#e0e0e0">Прямоугольник</div>
<div class="t" style="left:609px;top:602px;color:#e0e0e0">(задача)</div>
<div class="a" style="left:575px;top:967px;width:731px;height:30px;background:linear-gradient(#f6f7f9 0,#e8eaee 40%,#d4d8e0 75%,#c8ccd6 100%);border-radius:0 0 4px 4px"></div>
<div class="a" style="left:584px;top:970px;width:21px;height:22px;background:#fde6b0;border:1px solid #e0a468;border-radius:2px"></div>
<div class="a" style="left:607px;top:970px;width:20px;height:22px;background:#fde6b0;border:1px solid #e0a468;border-radius:2px"></div>
<div class="a" style="left:629px;top:970px;width:20px;height:22px;background:#fde6b0;border:1px solid #e0a468;border-radius:2px"></div>
<div class="a" style="left:651px;top:970px;width:21px;height:22px;background:#fde6b0;border:1px solid #e0a468;border-radius:2px"></div>
<div class="a" style="left:829px;top:970px;width:21px;height:22px;background:#fde6b0;border:1px solid #e0a468;border-radius:2px"></div>
<svg style="left:588px;top:975px" width="14" height="13" viewBox="0 0 14 13"><path d="M3 0v13M6 0v13M9 0v13M12 0v13M0 2.5h14M0 5.5h14M0 8.5h14M0 11.5h14" stroke="#3a6ab8" stroke-width="1.1"/></svg>
<svg style="left:609px;top:973px" width="17" height="17" viewBox="0 0 17 17"><path d="M3.5 2v12.5H16" stroke="#3a5a8a" stroke-width="1.3" fill="none"/><path d="M3.5 0 L1 4 H6Z M17 14.5 L13 12 V17Z" fill="#3a5a8a"/></svg>
<svg style="left:630px;top:973px" width="17" height="17" viewBox="0 0 17 17"><rect x="6.5" y="0.5" width="8.5" height="9.5" fill="#eef2fa" stroke="#3a70d0" stroke-width="1.1"/><path d="M5 10.5 L13.5 2.5 M5.5 11 L15 5.3" stroke="#333" stroke-width=".8"/><ellipse cx="2.6" cy="9.5" rx="2" ry="1.4" fill="none" stroke="#111" stroke-width="1.1"/><ellipse cx="4" cy="13" rx="1.6" ry="1.4" fill="none" stroke="#111" stroke-width="1.1"/></svg>
<svg style="left:654px;top:974px" width="14" height="13" viewBox="0 0 14 13"><path d="M0.5 4.5 H3 L4.5 0.5 L7 4.5 H13.5 V12.5 H0.5Z" fill="#f4f4f4" stroke="#4a6a98"/></svg>
<svg style="left:675px;top:975px" width="16" height="12" viewBox="0 0 16 12"><rect x="0.5" y="0.5" width="15" height="11" fill="#f0f2f6" stroke="#5a7aa8"/></svg>
<div class="a" style="left:697px;top:973px;width:1px;height:16px;background:#444"></div>
<svg style="left:705px;top:974px" width="16" height="16" viewBox="0 0 16 16"><circle cx="6" cy="6" r="5" fill="#e8f0f8" stroke="#5a6a80" stroke-width="1.2"/><path d="M9.5 9.5 L14.5 14.5" stroke="#c09020" stroke-width="3"/><path d="M3.5 6h5" stroke="#2a4a80" stroke-width="1.6"/></svg>
<svg style="left:727px;top:974px" width="16" height="16" viewBox="0 0 16 16"><circle cx="6" cy="6" r="5" fill="#e8f0f8" stroke="#5a6a80" stroke-width="1.2"/><path d="M9.5 9.5 L14.5 14.5" stroke="#c09020" stroke-width="3"/><path d="M3.5 6h5M6 3.5v5" stroke="#2a4a80" stroke-width="1.6"/></svg>
<div class="a" style="left:749px;top:973px;width:1px;height:16px;background:#444"></div>
<svg style="left:757px;top:974px" width="16" height="16" viewBox="0 0 16 16"><circle cx="6" cy="6" r="5" fill="#e8f0f8" stroke="#5a6a80" stroke-width="1.2"/><path d="M9.5 9.5 L14.5 14.5" stroke="#c09020" stroke-width="3"/><text x="6" y="8.5" font-size="7" font-family="Liberation Sans" font-weight="bold" text-anchor="middle" fill="#2a4a80">1</text></svg>
<svg style="left:780px;top:974px" width="15" height="15" viewBox="0 0 15 15"><path d="M13 2 L6 9 L9 12 H1 V4 L4 7 L11 0Z" fill="#60b040" stroke="#308020" stroke-width=".8"/></svg>
<div class="a" style="left:801px;top:973px;width:1px;height:16px;background:#444"></div>
<svg style="left:810px;top:975px" width="15" height="14" viewBox="0 0 15 14"><rect x="0.5" y="0.5" width="14" height="13" fill="#fff" stroke="#5a8ac8"/><rect x="1" y="1" width="13" height="2" fill="#80c050"/><path d="M1 5.5h13M1 8h13M1 10.5h13M5 3v10M9 3v10" stroke="#8ab0e0" stroke-width=".8"/></svg>
<svg style="left:832px;top:975px" width="15" height="14" viewBox="0 0 15 14"><rect x="0.5" y="0.5" width="14" height="13" fill="#fff" stroke="#5a8ac8"/><rect x="1" y="1" width="13" height="3" fill="#f08040"/><rect x="3" y="6" width="3" height="3" fill="#60b040"/><rect x="8" y="9" width="3" height="3" fill="#60b040"/><path d="M1 6h13M1 9h13M4.5 4v9M9.5 4v9" stroke="#a0b8d8" stroke-width=".6"/></svg>
<svg style="left:854px;top:975px" width="15" height="14" viewBox="0 0 15 14"><rect x="0.5" y="0.5" width="14" height="13" fill="#fff" stroke="#5a8ac8"/><rect x="2" y="2" width="11" height="2" fill="#a0c0e8"/><rect x="2" y="6" width="3" height="6" fill="#3a70c0"/><rect x="7" y="6" width="6" height="6" fill="#60b040"/></svg>
<div class="a" style="left:875px;top:973px;width:1px;height:16px;background:#444"></div>
<svg style="left:883px;top:973px" width="17" height="17" viewBox="0 0 17 17"><path d="M2 2 L14 14 M2 14 L8 8" stroke="#7090c0" stroke-width="1"/><circle cx="8" cy="8" r="1.5" fill="none" stroke="#7090c0"/><circle cx="2" cy="2" r="1.5" fill="none" stroke="#7090c0"/><circle cx="14" cy="14" r="1.5" fill="none" stroke="#7090c0"/><path d="M10 7 L15 2 M12 1 H16 V5" stroke="#60c060" stroke-width="1.6" fill="none"/></svg>
<svg style="left:905px;top:973px" width="17" height="17" viewBox="0 0 17 17"><path d="M1 4 V16 H13" stroke="#222" stroke-dasharray="1.5 1.5" fill="none"/><path d="M9 1v11M3.5 6.5h11" stroke="#2a70d0" stroke-width="1.4"/><path d="M9 0 L6.5 3 H11.5Z M9 13 L6.5 10 H11.5Z M2 6.5 L5 4 V9Z M16 6.5 L13 4 V9Z" fill="#2a70d0"/></svg>
<svg style="left:927px;top:973px" width="17" height="17" viewBox="0 0 17 17"><path d="M1 4 V16 H13" stroke="#222" stroke-dasharray="1.5 1.5" fill="none"/><path d="M12 3 A4 4 0 1 1 6.5 5" stroke="#2a70d0" stroke-width="1.8" fill="none"/><path d="M11 0 L15 3 L11 5Z" fill="#2a70d0"/></svg>
<div class="a" style="left:971px;top:973px;width:1px;height:16px;background:#444"></div>
<svg style="left:981px;top:974px" width="16" height="16" viewBox="0 0 16 16"><circle cx="6" cy="6" r="5" fill="#e8f0f8" stroke="#5a6a80" stroke-width="1.2"/><path d="M9.5 9.5 L14.5 14.5" stroke="#c09020" stroke-width="3"/></svg>
<div class="t" style="left:1003px;top:975px;font-size:11.2px">2.8000 ( 2.8 : 1 )</div>
<div class="a" style="left:1131px;top:973px;width:1px;height:16px;background:#444"></div>
<svg style="left:1140px;top:973px" width="16" height="16" viewBox="0 0 16 16"><path d="M1.5 1 H5 V11.5 H15 V15 H1.5Z" fill="#f8c880" stroke="#d08830" stroke-width=".9"/><path d="M5 4h-2M5 7h-2M5 10h-2M8 11.5v2M11 11.5v2" stroke="#d08830" stroke-width=".7"/></svg>
<div class="t" style="left:1163px;top:975px;font-size:11.4px">-123.16, 315.95</div>
<div class="a" style="left:1312px;top:74px;width:606px;height:19px;background:linear-gradient(#7e7e7e 0,#737373 40%,#666 100%);border-radius:4px 4px 0 0"></div>
<div class="t" style="left:1318px;top:77px;color:#fff">Свойства</div>
<svg style="left:1873px;top:82px" width="9" height="5" viewBox="0 0 9 5"><path d="M0 0 H9 L4.5 4.5Z" fill="#e8e8e8"/></svg>
<svg style="left:1889px;top:78px" width="8" height="11" viewBox="0 0 8 11"><path d="M1.5 0.5 H6.5 V7 H8 V8 H4.5 V11 H3.5 V8 H0 V7 H1.5 Z M2.8 1.5 V7 H5.2 V1.5Z" fill="#e8e8e8" fill-rule="evenodd"/></svg>
<svg style="left:1905px;top:79px" width="9" height="9" viewBox="0 0 9 9"><path d="M1 1 L8 8 M8 1 L1 8" stroke="#e8e8e8" stroke-width="2.2"/></svg>
<div class="a" style="left:1312px;top:93px;width:606px;height:645px;background:#fff"></div>
<div class="t" style="left:1316px;top:95px;">Имя</div>
<div class="t" style="left:1555px;top:95px;">Int1</div>
<div class="a" style="left:1312px;top:109px;width:606px;height:1px;background:#e2e2e2"></div>
<div class="t" style="left:1316px;top:112px;">Описание</div>
<div class="t" style="left:1555px;top:112px;"></div>
<div class="a" style="left:1312px;top:126px;width:606px;height:1px;background:#e2e2e2"></div>
<div class="t" style="left:1316px;top:129px;">Активность</div>
<div class="t" style="left:1555px;top:129px;">Есть</div>
<div class="a" style="left:1312px;top:143px;width:606px;height:1px;background:#e2e2e2"></div>
<div class="t" style="left:1316px;top:146px;">Тип</div>
<div class="t" style="left:1555px;top:146px;">int</div>
<div class="a" style="left:1312px;top:160px;width:606px;height:1px;background:#e2e2e2"></div>
<div class="t" style="left:1316px;top:163px;">Размерность</div>
<div class="t" style="left:1555px;top:163px;">8</div>
<div class="a" style="left:1312px;top:177px;width:606px;height:1px;background:#e2e2e2"></div>
<div class="a" style="left:1313px;top:179px;width:237px;height:16px;background:#bfc3cd"></div>
<div class="t" style="left:1316px;top:180px;">Значения по умолчанию</div>
<div class="t" style="left:1555px;top:180px;">3 {4, 50, 60}</div>
<div class="a" style="left:1312px;top:194px;width:606px;height:1px;background:#e2e2e2"></div>
<div class="t" style="left:1316px;top:197px;">Минимальное значение</div>
<div class="t" style="left:1555px;top:197px;">-2147483648</div>
<div class="a" style="left:1312px;top:211px;width:606px;height:1px;background:#e2e2e2"></div>
<div class="t" style="left:1316px;top:214px;">Максимальное значение</div>
<div class="t" style="left:1555px;top:214px;">2147483647</div>
<div class="a" style="left:1312px;top:228px;width:606px;height:1px;background:#e2e2e2"></div>
<div class="a" style="left:1312px;top:229px;width:606px;height:17px;background:#efefef"></div>
<div class="a" style="left:1312px;top:245px;width:606px;height:1px;background:#e2e2e2"></div>
<div class="a" style="left:1312px;top:229px;width:14px;height:16px;background:#e6e6e6"></div>
<div class="a" style="left:1315px;top:232px;width:9px;height:9px;background:linear-gradient(#fff 0,#fff 50%,#ececec 70%,#e0e0e0 100%);border:1px solid #8c8c8c;border-radius:2px"></div>
<div class="a" style="left:1317px;top:236px;width:5px;height:1px;background:#3848b0"></div>
<div class="t" style="left:1331px;top:231px;font-weight:bold;color:#555">Инициализация</div>
<div class="a" style="left:1312px;top:246px;width:9px;height:17px;background:#efefef"></div>
<div class="t" style="left:1324px;top:248px;">Инициализировать</div>
<div class="t" style="left:1555px;top:248px;">Нет</div>
<div class="a" style="left:1312px;top:262px;width:606px;height:1px;background:#e2e2e2"></div>
<div class="a" style="left:1551px;top:93px;width:1px;height:645px;background:#e2e2e2"></div>
<div class="a" style="left:1901px;top:178px;width:17px;height:16px;background:linear-gradient(#f8f8f8,#dcdcdc);border:1px solid #8a8a8a;border-radius:2px"></div>
<div class="t" style="left:1904px;top:181px;font-size:11px;font-weight:bold">...</div>
<div class="a" style="left:1313px;top:738px;width:605px;height:6px;background:#b4b4b4"></div>
<div class="a" style="left:1603px;top:740px;width:1px;height:1px;background:#333"></div>
<div class="a" style="left:1605px;top:740px;width:1px;height:1px;background:#333"></div>
<div class="a" style="left:1607px;top:740px;width:1px;height:1px;background:#333"></div>
<div class="a" style="left:1609px;top:740px;width:1px;height:1px;background:#333"></div>
<div class="a" style="left:1611px;top:740px;width:1px;height:1px;background:#333"></div>
<div class="a" style="left:1613px;top:740px;width:1px;height:1px;background:#333"></div>
<div class="a" style="left:1313px;top:744px;width:604px;height:44px;background:#efefef;border:1px solid #a0a0a0"></div>
<div class="t" style="left:1317px;top:747px;font-weight:bold;font-size:11.6px">Значения по умолчанию</div>
<div class="t" style="left:1317px;top:762px;">Значения по умолчанию для массива входной переменной</div>
<div class="a" style="left:1312px;top:788px;width:606px;height:1px;background:#dcdcdc"></div>
<div class="a" style="left:1312px;top:795px;width:606px;height:19px;background:linear-gradient(#7e7e7e 0,#737373 40%,#666 100%);border-radius:4px 4px 0 0"></div>
<div class="t" style="left:1318px;top:798px;color:#fff">Тестовые сценарии</div>
<svg style="left:1873px;top:803px" width="9" height="5" viewBox="0 0 9 5"><path d="M0 0 H9 L4.5 4.5Z" fill="#e8e8e8"/></svg>
<svg style="left:1889px;top:799px" width="8" height="11" viewBox="0 0 8 11"><path d="M1.5 0.5 H6.5 V7 H8 V8 H4.5 V11 H3.5 V8 H0 V7 H1.5 Z M2.8 1.5 V7 H5.2 V1.5Z" fill="#e8e8e8" fill-rule="evenodd"/></svg>
<svg style="left:1905px;top:800px" width="9" height="9" viewBox="0 0 9 9"><path d="M1 1 L8 8 M8 1 L1 8" stroke="#e8e8e8" stroke-width="2.2"/></svg>
<div class="a" style="left:1312px;top:814px;width:606px;height:307px;background:#fff"></div>
<div class="a" style="left:1312px;top:814px;width:13px;height:307px;background:#f7f7f7"></div>
<div class="a" style="left:1325px;top:814px;width:593px;height:17px;background:linear-gradient(#fff 0,#fff 40%,#f1f2f4 45%,#eeeff2 100%)"></div>
<div class="a" style="left:1325px;top:830px;width:593px;height:1px;background:#d8d8d8"></div>
<div class="a" style="left:1583px;top:814px;width:1px;height:307px;background:#e4e4e4"></div>
<div class="t" style="left:1331px;top:817px;">Имя</div>
<div class="t" style="left:1591px;top:817px;">Описание</div>
<div class="a" style="left:1325px;top:848px;width:593px;height:1px;background:#ececec"></div>
<div class="a" style="left:1325px;top:865px;width:593px;height:1px;background:#ececec"></div>
<div class="a" style="left:1325px;top:882px;width:593px;height:1px;background:#ececec"></div>
<div class="a" style="left:1325px;top:899px;width:593px;height:1px;background:#ececec"></div>
<div class="a" style="left:1325px;top:916px;width:593px;height:1px;background:#ececec"></div>
<div class="a" style="left:1325px;top:933px;width:593px;height:1px;background:#ececec"></div>
<div class="a" style="left:1325px;top:950px;width:593px;height:1px;background:#ececec"></div>
<div class="a" style="left:1325px;top:967px;width:593px;height:1px;background:#ececec"></div>
<div class="a" style="left:1325px;top:984px;width:593px;height:1px;background:#ececec"></div>
<div class="a" style="left:1325px;top:1001px;width:593px;height:1px;background:#ececec"></div>
<div class="a" style="left:1325px;top:1018px;width:593px;height:1px;background:#ececec"></div>
<div class="a" style="left:1325px;top:1035px;width:593px;height:1px;background:#ececec"></div>
<div class="a" style="left:1325px;top:1052px;width:593px;height:1px;background:#ececec"></div>
<div class="a" style="left:1325px;top:1069px;width:593px;height:1px;background:#ececec"></div>
<div class="a" style="left:1325px;top:1086px;width:593px;height:1px;background:#ececec"></div>
<div class="a" style="left:1325px;top:1103px;width:593px;height:1px;background:#ececec"></div>
<div class="a" style="left:1325px;top:1120px;width:593px;height:1px;background:#ececec"></div>
<div class="a" style="left:1325px;top:832px;width:13px;height:16px;background:#f7f7f7"></div>
<div class="a" style="left:1325px;top:849px;width:24px;height:16px;background:#f7f7f7"></div>
<div class="a" style="left:1358px;top:832px;width:225px;height:16px;background:#bfc3cd"></div>
<div class="a" style="left:1584px;top:832px;width:334px;height:16px;background:#bfc3cd"></div>
<div class="a" style="left:1328px;top:835px;width:9px;height:9px;background:linear-gradient(#fff 0,#fff 50%,#ececec 70%,#e0e0e0 100%);border:1px solid #8c8c8c;border-radius:2px"></div>
<div class="a" style="left:1330px;top:839px;width:5px;height:1px;background:#3848b0"></div>
<svg style="left:1341px;top:833px" width="16" height="16" viewBox="0 0 16 16"><rect x="1.5" y="0.5" width="14" height="11" fill="#c8c8c8" stroke="#8a8a8a"/><rect x="3" y="2" width="11" height="8" fill="#2e3640"/><path d="M6 7 L8 4 L9.5 6 L11 5 H13" stroke="#40d0a0" fill="none" stroke-width=".9"/><rect x="0.5" y="5.5" width="5" height="6" fill="#f0d880" stroke="#8a98b0"/><rect x="2.5" y="7.5" width="5" height="6" fill="#f4f8ff" stroke="#5a6a88"/><rect x="4" y="9" width="2" height="1" fill="#2050d0"/><rect x="4" y="11" width="2" height="1" fill="#2050d0"/></svg>
<div class="t" style="left:1359px;top:834px;">menu_mfci_10 {U:\Формат Про\menu_mfci...</div>
<div class="a" style="left:1332px;top:846px;width:1px;height:11px;background:repeating-linear-gradient(#999 0 1px,transparent 1px 2px)"></div>
<div class="a" style="left:1333px;top:856px;width:17px;height:1px;background:repeating-linear-gradient(90deg,#999 0 1px,transparent 1px 2px)"></div>
<svg style="left:1313px;top:852px" width="11" height="11" viewBox="0 0 11 11"><rect x="0" y="0" width="11" height="11" rx="3.5" fill="#e0a820"/><rect x="4.5" y="2" width="2" height="4.5" fill="#fff"/><rect x="4.5" y="7.5" width="2" height="1.6" fill="#fff"/></svg>
<svg style="left:1352px;top:851px" width="16" height="13" viewBox="0 0 16 13"><rect x="0.5" y="0.5" width="15" height="12" fill="#d0d0d0" stroke="#808080"/><rect x="2" y="2" width="12" height="9" fill="#2a3038"/><path d="M2.5 7 H5 L6.5 3.5 L8 9 L9.5 6 H13.5" stroke="#30d0a0" fill="none" stroke-width=".9"/></svg>
<div class="a" style="left:1371px;top:851px;width:11px;height:11px;background:linear-gradient(135deg,#dcdcdc 0,#f0f0f0 40%,#fff 70%);border:1px solid #1e4a80"></div>
<svg style="left:1371.5px;top:851.5px" width="10" height="10" viewBox="0 0 10 10"><path d="M1.3 4.6 L3.9 8 L8.8 1.4" stroke="#2a3a8a" stroke-width="2.1" fill="none"/></svg>
<div class="t" style="left:1385px;top:850px;font-weight:bold;font-size:12px">Набор сценариев&nbsp;&nbsp;{00000000-0...</div>
<div class="a" style="left:1312px;top:1121px;width:606px;height:17px;background:#ececec"></div>
<svg style="left:1318px;top:1126px" width="4" height="7" viewBox="0 0 4 7"><path d="M4 0 V7 L0 3.5Z" fill="#303030"/></svg>
<svg style="left:1908px;top:1126px" width="4" height="7" viewBox="0 0 4 7"><path d="M0 0 V7 L4 3.5Z" fill="#303030"/></svg>
<div class="a" style="left:1330px;top:1122px;width:550px;height:15px;background:linear-gradient(#f4f4f4 0,#e8e8e8 45%,#d4d4d8 55%,#c8c8cc 100%);border:1px solid #9a9a9a;border-radius:2px"></div>
<div class="a" style="left:1602px;top:1126px;width:1px;height:7px;background:#555"></div>
<div class="a" style="left:1604px;top:1126px;width:1px;height:7px;background:#555"></div>
<div class="a" style="left:1606px;top:1126px;width:1px;height:7px;background:#555"></div>
<div class="a" style="left:1385px;top:1138px;width:127px;height:20px;background:#fff;border-radius:0 0 3px 3px"></div>
<svg style="left:1317px;top:1140px" width="14" height="15" viewBox="0 0 14 15"><rect x="0.5" y="2.5" width="12" height="12" fill="#e8f0fc" stroke="#3060b0"/><rect x="0.5" y="2.5" width="12" height="3" fill="#6090e0"/><path d="M4 6 A4 4 0 1 1 8 11" stroke="#2a60d0" stroke-width="2" fill="none"/><path d="M3 9 L8 12 L4 14Z" fill="#2a60d0"/></svg>
<div class="t" style="left:1336px;top:1141px;color:#fff">Функции</div>
<svg style="left:1390px;top:1140px" width="16" height="14" viewBox="0 0 16 14"><rect x="0.5" y="0.5" width="15" height="13" fill="#606870" stroke="#888"/><rect x="2" y="2" width="12" height="10" fill="#2a3038"/><path d="M2 7 H5 L6.5 4 L8 10 L9.5 6 H14" stroke="#30d0a0" fill="none" stroke-width=".9"/></svg>
<div class="t" style="left:1408px;top:1141px;">Тестовые сценарии</div>
</body></html>
